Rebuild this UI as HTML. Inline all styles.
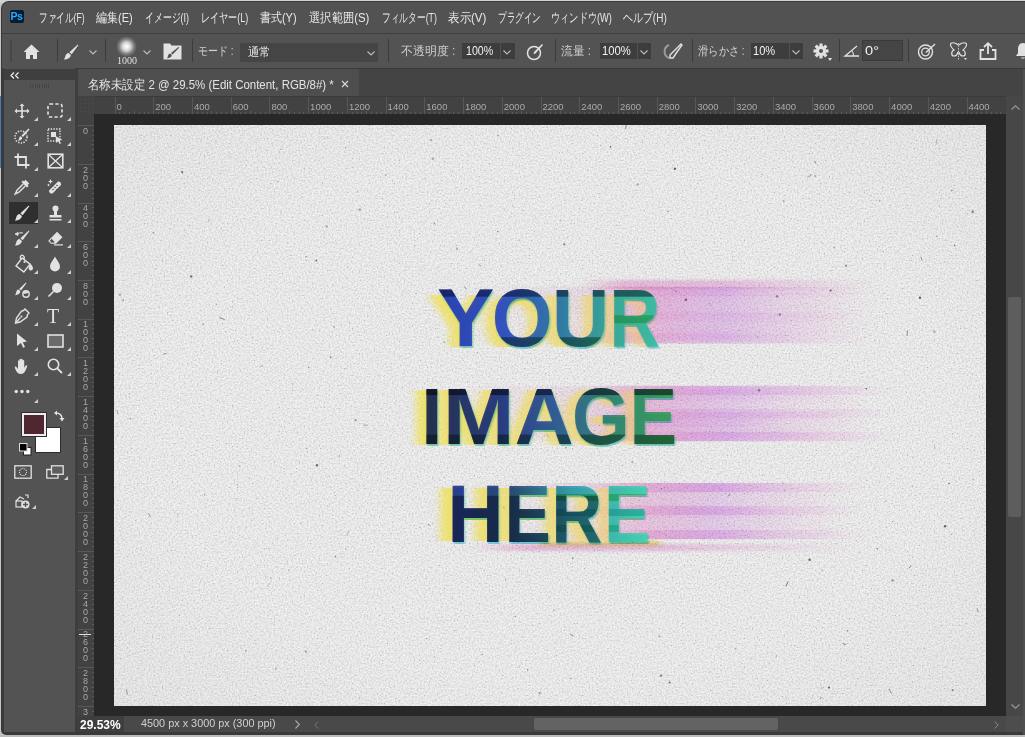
<!DOCTYPE html><html><head><meta charset="utf-8"><style>
*{margin:0;padding:0;box-sizing:border-box}
html,body{width:1025px;height:737px;overflow:hidden;background:#c4c4c4;font-family:"Liberation Sans",sans-serif}
.a{position:absolute}
.m{position:absolute;top:10px;font-size:12px;line-height:14px;color:#e8e8e8;white-space:nowrap}
.sep{position:absolute;top:39px;width:1px;height:23px;background:#3c3c3c}
.lbl{position:absolute;top:45px;font-size:12px;line-height:14px;color:#cfcfcf;white-space:nowrap}
.inp{position:absolute;top:43px;height:16px;background:#3d3d3d}
.val{position:absolute;top:44px;font-size:12px;line-height:14px;color:#f2f2f2;white-space:nowrap}
.rn{position:absolute;top:102px;font-size:9.5px;line-height:10px;color:#ababab;white-space:nowrap}
.vn{position:absolute;left:81px;font-size:9px;line-height:8px;color:#a8a8a8;width:9px;text-align:center}
svg{position:absolute;overflow:visible}
</style></head><body>
<div class="a" style="left:0;top:0;width:1025px;height:3px;background:#d2d2d2"></div>
<div class="a" style="left:0;top:96px;width:2px;height:72px;background:#4a78b8"></div>
<div class="a" style="left:1px;top:1px;width:1030px;height:734px;background:#3a3a3a;border-radius:8px 0 0 5px"></div>
<div class="a" style="left:2px;top:2px;width:1030px;height:31px;background:#525252;border-radius:7px 0 0 0"></div>
<div class="a" style="left:10px;top:10px;width:14px;height:13px;background:#001e36;border-radius:2px"></div>
<div class="a" style="left:10.5px;top:10px;font-size:10.5px;line-height:13px;font-weight:bold;color:#31a8ff;letter-spacing:-0.4px">Ps</div>
<div class="a" style="left:39px;top:9.5px;font-family:'Liberation Sans';font-size:13px;line-height:15px;color:#e8e8e8;font-weight:normal;white-space:nowrap;transform-origin:0 0;transform:scaleX(0.6646);"><span>ファイル(F)</span></div>
<div class="a" style="left:96px;top:9.5px;font-family:'Liberation Sans';font-size:13px;line-height:15px;color:#e8e8e8;font-weight:normal;white-space:nowrap;transform-origin:0 0;transform:scaleX(0.8467);"><span>編集(E)</span></div>
<div class="a" style="left:145px;top:9.5px;font-family:'Liberation Sans';font-size:13px;line-height:15px;color:#e8e8e8;font-weight:normal;white-space:nowrap;transform-origin:0 0;transform:scaleX(0.6845);"><span>イメージ(I)</span></div>
<div class="a" style="left:200.7px;top:9.5px;font-family:'Liberation Sans';font-size:13px;line-height:15px;color:#e8e8e8;font-weight:normal;white-space:nowrap;transform-origin:0 0;transform:scaleX(0.6967);"><span>レイヤー(L)</span></div>
<div class="a" style="left:260.4px;top:9.5px;font-family:'Liberation Sans';font-size:13px;line-height:15px;color:#e8e8e8;font-weight:normal;white-space:nowrap;transform-origin:0 0;transform:scaleX(0.8444);"><span>書式(Y)</span></div>
<div class="a" style="left:309.3px;top:9.5px;font-family:'Liberation Sans';font-size:13px;line-height:15px;color:#e8e8e8;font-weight:normal;white-space:nowrap;transform-origin:0 0;transform:scaleX(0.8710);"><span>選択範囲(S)</span></div>
<div class="a" style="left:381.6px;top:9.5px;font-family:'Liberation Sans';font-size:13px;line-height:15px;color:#e8e8e8;font-weight:normal;white-space:nowrap;transform-origin:0 0;transform:scaleX(0.6715);"><span>フィルター(T)</span></div>
<div class="a" style="left:447.6px;top:9.5px;font-family:'Liberation Sans';font-size:13px;line-height:15px;color:#e8e8e8;font-weight:normal;white-space:nowrap;transform-origin:0 0;transform:scaleX(0.8859);"><span>表示(V)</span></div>
<div class="a" style="left:497.6px;top:9.5px;font-family:'Liberation Sans';font-size:13px;line-height:15px;color:#e8e8e8;font-weight:normal;white-space:nowrap;transform-origin:0 0;transform:scaleX(0.6569);"><span>プラグイン</span></div>
<div class="a" style="left:551.4px;top:9.5px;font-family:'Liberation Sans';font-size:13px;line-height:15px;color:#e8e8e8;font-weight:normal;white-space:nowrap;transform-origin:0 0;transform:scaleX(0.7075);"><span>ウィンドウ(W)</span></div>
<div class="a" style="left:623.3px;top:9.5px;font-family:'Liberation Sans';font-size:13px;line-height:15px;color:#e8e8e8;font-weight:normal;white-space:nowrap;transform-origin:0 0;transform:scaleX(0.7660);"><span>ヘルプ(H)</span></div>
<div class="a" style="left:2px;top:33px;width:1030px;height:1px;background:#3e3e3e"></div>
<div class="a" style="left:2px;top:34px;width:1030px;height:34px;background:#535353"></div>
<div class="a" style="left:1023px;top:68px;width:2px;height:667px;background:#505050"></div>
<div class="a" style="left:10px;top:40px;width:2px;height:22px;background:#474747"></div>
<div class="sep" style="left:57px"></div>
<div class="sep" style="left:105px"></div>
<div class="sep" style="left:192px"></div>
<div class="sep" style="left:388px"></div>
<div class="sep" style="left:555px"></div>
<div class="sep" style="left:692px"></div>
<div class="sep" style="left:839px"></div>
<div class="sep" style="left:908px"></div>
<svg style="left:23px;top:44px" width="17" height="16" viewBox="0 0 17 16"><path d="M8.5 0.5 L0.5 8 L3 8 L3 15 L7 15 L7 11 L10 11 L10 15 L14 15 L14 8 L16.5 8 Z" fill="#e2e2e2"/></svg>
<svg style="left:63px;top:44px" width="16" height="16" viewBox="0 0 16 16"><path d="M14.8 0.6 L15.4 1.2 L8.6 10.2 L6.4 8.2 Z" fill="#e2e2e2"/><path d="M5.6 8.9 L7.9 11 C7.6 13.6 5.2 15.6 0.8 15.6 C1.6 14.8 2 13.6 2.4 12 C2.8 10.2 4 9 5.6 8.9 Z" fill="#e2e2e2"/></svg>
<svg style="left:89px;top:50px" width="8" height="5" viewBox="0 0 8 5"><path d="M0.5 0.5 L4 4 L7.5 0.5" fill="none" stroke="#bdbdbd" stroke-width="1.1"/></svg>
<div class="a" style="left:116px;top:36px;width:21px;height:21px;border-radius:50%;background:radial-gradient(circle closest-side,#ffffff 0%,#f0f0f0 20%,#c8c8c8 45%,rgba(160,160,160,0.6) 70%,rgba(83,83,83,0) 100%)"></div>
<div class="a" style="left:117px;top:54px;font-family:'Liberation Serif';font-size:11px;line-height:13px;color:#e0e0e0;font-weight:normal;white-space:nowrap;transform-origin:0 0;transform:scaleX(0.9091);"><span>1000</span></div>
<svg style="left:143px;top:50px" width="8" height="5" viewBox="0 0 8 5"><path d="M0.5 0.5 L4 4 L7.5 0.5" fill="none" stroke="#bdbdbd" stroke-width="1.1"/></svg>
<svg style="left:163px;top:43px" width="19" height="17" viewBox="0 0 19 17"><path d="M0.5 0.5 L7 0.5 L8.5 2.5 L18.5 2.5 L18.5 16.5 L0.5 16.5 Z" fill="#e2e2e2"/><path d="M15.5 4 L16.2 4.7 L9.5 11.5 L8 10 Z" fill="#535353"/><path d="M7.3 10.6 L8.9 12.2 C8.6 14 6.8 15 4 15.2 C4.6 14.5 4.8 13.6 5.1 12.6 C5.4 11.5 6.2 10.7 7.3 10.6 Z" fill="#535353"/></svg>
<div class="a" style="left:197.6px;top:44px;font-family:'Liberation Sans';font-size:12px;line-height:14px;color:#cfcfcf;font-weight:normal;white-space:nowrap;transform-origin:0 0;transform:scaleX(0.8296);"><span>モード :</span></div>
<div class="inp" style="left:240px;width:138px;height:19px;top:43px;background:#454545"></div>
<div class="a" style="left:248px;top:45px;font-family:'Liberation Sans';font-size:12px;line-height:14px;color:#e6e6e6;font-weight:normal;white-space:nowrap;transform-origin:0 0;transform:scaleX(0.9458);"><span>通常</span></div>
<svg style="left:367px;top:51px" width="8" height="5" viewBox="0 0 8 5"><path d="M0.5 0.5 L4 4 L7.5 0.5" fill="none" stroke="#bdbdbd" stroke-width="1.1"/></svg>
<div class="a" style="left:400.6px;top:44px;font-family:'Liberation Sans';font-size:12px;line-height:14px;color:#cfcfcf;font-weight:normal;white-space:nowrap;transform-origin:0 0;transform:scaleX(0.9950);"><span>不透明度 :</span></div>
<div class="inp" style="left:462px;width:53px"></div><div class="a" style="left:500px;top:43px;width:1px;height:16px;background:#505050"></div>
<div class="a" style="left:465.6px;top:43.3px;font-family:'Liberation Sans';font-size:13px;line-height:15px;color:#f2f2f2;font-weight:normal;white-space:nowrap;transform-origin:0 0;transform:scaleX(0.8180);"><span>100%</span></div>
<svg style="left:503px;top:50px" width="8" height="5" viewBox="0 0 8 5"><path d="M0.5 0.5 L4 4 L7.5 0.5" fill="none" stroke="#bdbdbd" stroke-width="1.1"/></svg>
<svg style="left:526px;top:43px" width="18" height="18" viewBox="0 0 18 18"><circle cx="8" cy="10" r="6.5" fill="none" stroke="#e2e2e2" stroke-width="1.5"/><path d="M16 1 L17 2 L9.5 10.5 L7.5 11 L8 9 Z" fill="#e2e2e2"/></svg>
<div class="a" style="left:561px;top:44px;font-family:'Liberation Sans';font-size:12px;line-height:14px;color:#cfcfcf;font-weight:normal;white-space:nowrap;transform-origin:0 0;transform:scaleX(0.9781);"><span>流量 :</span></div>
<div class="inp" style="left:600px;width:51px"></div><div class="a" style="left:637px;top:43px;width:1px;height:16px;background:#505050"></div>
<div class="a" style="left:601.7px;top:43.3px;font-family:'Liberation Sans';font-size:13px;line-height:15px;color:#f2f2f2;font-weight:normal;white-space:nowrap;transform-origin:0 0;transform:scaleX(0.8662);"><span>100%</span></div>
<svg style="left:640px;top:50px" width="8" height="5" viewBox="0 0 8 5"><path d="M0.5 0.5 L4 4 L7.5 0.5" fill="none" stroke="#bdbdbd" stroke-width="1.1"/></svg>
<svg style="left:663px;top:43px" width="20" height="17" viewBox="0 0 20 17"><path d="M6 2 A7 7 0 0 0 6 15" fill="none" stroke="#9a9a9a" stroke-width="2"/><path d="M18 1 L19 2 L14 9 L10 15 L7 15 L7 12 L12 7 Z" fill="none" stroke="#e2e2e2" stroke-width="1.4"/></svg>
<div class="a" style="left:698px;top:44px;font-family:'Liberation Sans';font-size:12px;line-height:14px;color:#cfcfcf;font-weight:normal;white-space:nowrap;transform-origin:0 0;transform:scaleX(0.8542);"><span>滑らかさ :</span></div>
<div class="inp" style="left:751px;width:52px"></div><div class="a" style="left:789px;top:43px;width:1px;height:16px;background:#505050"></div>
<div class="a" style="left:753px;top:43.3px;font-family:'Liberation Sans';font-size:13px;line-height:15px;color:#f2f2f2;font-weight:normal;white-space:nowrap;transform-origin:0 0;transform:scaleX(0.8528);"><span>10%</span></div>
<svg style="left:792px;top:50px" width="8" height="5" viewBox="0 0 8 5"><path d="M0.5 0.5 L4 4 L7.5 0.5" fill="none" stroke="#bdbdbd" stroke-width="1.1"/></svg>
<svg style="left:813px;top:43px" width="16" height="16" viewBox="-8 -8 16 16"><rect x="-1.6" y="-7.5" width="3.2" height="4" transform="rotate(0)" fill="#e2e2e2"/><rect x="-1.6" y="-7.5" width="3.2" height="4" transform="rotate(45)" fill="#e2e2e2"/><rect x="-1.6" y="-7.5" width="3.2" height="4" transform="rotate(90)" fill="#e2e2e2"/><rect x="-1.6" y="-7.5" width="3.2" height="4" transform="rotate(135)" fill="#e2e2e2"/><rect x="-1.6" y="-7.5" width="3.2" height="4" transform="rotate(180)" fill="#e2e2e2"/><rect x="-1.6" y="-7.5" width="3.2" height="4" transform="rotate(225)" fill="#e2e2e2"/><rect x="-1.6" y="-7.5" width="3.2" height="4" transform="rotate(270)" fill="#e2e2e2"/><rect x="-1.6" y="-7.5" width="3.2" height="4" transform="rotate(315)" fill="#e2e2e2"/><circle r="5" fill="#e2e2e2"/><circle r="2" fill="#535353"/></svg>
<svg style="left:828px;top:58px" width="4" height="3" viewBox="0 0 4 3"><path d="M0 0 L4 0 L2 3Z" fill="#e2e2e2"/></svg>
<svg style="left:844px;top:45px" width="16" height="12" viewBox="0 0 16 12"><path d="M15 11 L1 11 L13 1" fill="none" stroke="#e2e2e2" stroke-width="1.3"/><path d="M8 6 A6 6 0 0 1 9.5 11" fill="none" stroke="#e2e2e2" stroke-width="1.1"/></svg>
<div class="inp" style="left:862px;top:40px;width:41px;height:21px;background:#454545;border:1px solid #3a3a3a"></div>
<div class="a" style="left:865px;top:43.3px;font-family:'Liberation Sans';font-size:13px;line-height:15px;color:#f2f2f2;font-weight:normal;white-space:nowrap;transform-origin:0 0;transform:scaleX(1.1256);"><span>0°</span></div>
<svg style="left:917px;top:43px" width="19" height="17" viewBox="0 0 19 17"><circle cx="8.5" cy="9" r="7" fill="none" stroke="#e2e2e2" stroke-width="1.4"/><circle cx="8.5" cy="9" r="3.8" fill="none" stroke="#e2e2e2" stroke-width="1.3"/><path d="M17.5 0.5 L18.5 1.5 L10 9.5 L8.5 10 L9 8.5 Z" fill="#e2e2e2"/></svg>
<svg style="left:949px;top:42px" width="19" height="19" viewBox="0 0 19 19"><path d="M9 3 C6 0 1 0 1.5 3 C2 6 4 7 5 8 C2 9 2 14 5 14 C7 14 8.5 12 9 10" fill="none" stroke="#e2e2e2" stroke-width="1.2"/><path d="M10 3 C13 0 18 0 17.5 3 C17 6 15 7 14 8 C17 9 17 14 14 14 C12 14 10.5 12 10 10" fill="none" stroke="#e2e2e2" stroke-width="1.2"/><path d="M9.5 1 L9.5 18" stroke="#e2e2e2" stroke-width="0.8" stroke-dasharray="1.5 1"/><path d="M15 16 L18 16 L16.5 18Z" fill="#e2e2e2"/></svg>
<svg style="left:979px;top:42px" width="18" height="18" viewBox="0 0 18 18"><path d="M5 8 L1.5 8 L1.5 17 L16.5 17 L16.5 8 L13 8" fill="none" stroke="#e2e2e2" stroke-width="1.8"/><path d="M9 12 L9 1.5 M5 5 L9 1.2 L13 5" fill="none" stroke="#e2e2e2" stroke-width="1.8"/></svg>
<svg style="left:1015px;top:42px" width="16" height="18" viewBox="0 0 16 18"><path d="M8 1 C3.5 1 3 5 3 8 L3 11 L1 14 L15 14 L13 11 L13 8 C13 5 12.5 1 8 1 Z" fill="#e2e2e2"/><path d="M6 15.5 L10 15.5 C10 17 6 17 6 15.5" fill="#e2e2e2"/></svg>
<div class="a" style="left:4px;top:68px;width:71px;height:664px;background:#535353"></div>
<div class="a" style="left:4px;top:69px;width:71px;height:11px;background:#3f3f3f"></div>
<svg style="left:10px;top:72px" width="10" height="7" viewBox="0 0 10 7"><path d="M4 0.5 L1 3.5 L4 6.5 M8.5 0.5 L5.5 3.5 L8.5 6.5" fill="none" stroke="#f0f0f0" stroke-width="1.2"/></svg>
<div class="a" style="left:30.0px;top:84px;width:1px;height:4px;background:#454545"></div>
<div class="a" style="left:32.3px;top:84px;width:1px;height:4px;background:#454545"></div>
<div class="a" style="left:34.6px;top:84px;width:1px;height:4px;background:#454545"></div>
<div class="a" style="left:36.9px;top:84px;width:1px;height:4px;background:#454545"></div>
<div class="a" style="left:39.2px;top:84px;width:1px;height:4px;background:#454545"></div>
<div class="a" style="left:41.5px;top:84px;width:1px;height:4px;background:#454545"></div>
<div class="a" style="left:43.8px;top:84px;width:1px;height:4px;background:#454545"></div>
<div class="a" style="left:46.1px;top:84px;width:1px;height:4px;background:#454545"></div>
<div class="a" style="left:48.4px;top:84px;width:1px;height:4px;background:#454545"></div>
<div class="a" style="left:75px;top:68px;width:3px;height:664px;background:#3e3e3e"></div>
<svg style="left:14.0px;top:102.9px" width="16" height="16" viewBox="0 0 16 16"><path d="M8 0.5 L10.5 3 L8.8 3 L8.8 7.2 L13 7.2 L13 5.5 L15.5 8 L13 10.5 L13 8.8 L8.8 8.8 L8.8 13 L10.5 13 L8 15.5 L5.5 13 L7.2 13 L7.2 8.8 L3 8.8 L3 10.5 L0.5 8 L3 5.5 L3 7.2 L7.2 7.2 L7.2 3 L5.5 3 Z" fill="#e2e2e2"/></svg>
<svg style="left:47.0px;top:103.4px" width="16" height="15" viewBox="0 0 16 15"><rect x="1" y="1" width="14" height="13" rx="2" fill="none" stroke="#e2e2e2" stroke-width="1.6" stroke-dasharray="3.2 2.2"/></svg>
<svg style="left:14.0px;top:127.6px" width="16" height="16" viewBox="0 0 16 16"><circle cx="7" cy="9" r="6" fill="none" stroke="#e2e2e2" stroke-width="1.6" stroke-dasharray="1.3 1.4"/><path d="M14.5 0.5 L15.5 1.5 L9 9 L7.5 7.5 Z" fill="#e2e2e2"/><path d="M6.8 8.3 L8.3 9.8 C8 11.6 6.5 12.6 4 12.8 C4.6 12.2 4.8 11.3 5 10.5 C5.3 9.3 5.8 8.5 6.8 8.3Z" fill="#e2e2e2"/></svg>
<svg style="left:47.0px;top:127.6px" width="16" height="16" viewBox="0 0 16 16"><rect x="1" y="1" width="12" height="12" fill="none" stroke="#e2e2e2" stroke-width="1.4" stroke-dasharray="1.4 1.3"/><rect x="4" y="4" width="5" height="5" fill="#e2e2e2"/><path d="M8.5 8 L15.5 12 L12.5 12.5 L14 15.5 L12.6 16 L11.3 13.2 L9.3 15 Z" fill="#e2e2e2"/></svg>
<svg style="left:14.0px;top:152.6px" width="16" height="16" viewBox="0 0 16 16"><path d="M4 0.5 L4 12 L15.5 12 M0.5 4 L12 4 L12 15.5" fill="none" stroke="#e2e2e2" stroke-width="1.8"/></svg>
<svg style="left:46.5px;top:152.6px" width="17" height="16" viewBox="0 0 17 16"><rect x="1.2" y="1.2" width="14.6" height="13.6" fill="none" stroke="#e2e2e2" stroke-width="1.6"/><path d="M1.5 1.5 L15.5 14.5 M15.5 1.5 L1.5 14.5" stroke="#e2e2e2" stroke-width="1.3"/></svg>
<svg style="left:14.0px;top:179.4px" width="16" height="16" viewBox="0 0 16 16"><path d="M11.5 0.8 L15.2 4.5 L13.6 6 L14.6 7 L13 8.6 L7.4 3 L9 1.4 L10 2.4 Z" fill="#e2e2e2"/><path d="M9.2 5 L3 11.2 L1.2 15 L5 13.2 L11.2 7" fill="none" stroke="#e2e2e2" stroke-width="1.4"/></svg>
<svg style="left:47.0px;top:179.4px" width="16" height="16" viewBox="0 0 16 16"><path d="M12 3 A2.8 2.8 0 0 1 15 6.5 L6.5 15 A2.8 2.8 0 0 1 3 12 Z" fill="#e2e2e2" transform="translate(-1 -0.5)"/><circle cx="8" cy="8.5" r="0.8" fill="#535353"/><circle cx="10" cy="6.5" r="0.8" fill="#535353"/><circle cx="6" cy="10.5" r="0.8" fill="#535353"/><circle cx="10" cy="10.5" r="0.8" fill="#535353"/><circle cx="6" cy="6.5" r="0.8" fill="#535353"/><path d="M3.5 0 L4.2 1.8 L6 2.5 L4.2 3.2 L3.5 5 L2.8 3.2 L1 2.5 L2.8 1.8Z" fill="#e2e2e2"/><path d="M1.5 4.5 L2 5.5 L3 6 L2 6.5 L1.5 7.5 L1 6.5 L0 6 L1 5.5Z" fill="#e2e2e2"/></svg>
<div class="a" style="left:9px;top:202px;width:29px;height:22px;background:#2f2f2f"></div>
<svg style="left:14.0px;top:205.0px" width="16" height="16" viewBox="0 0 16 16"><path d="M14.8 0.6 L15.4 1.2 L8.6 10.2 L6.4 8.2 Z" fill="#e2e2e2"/><path d="M5.6 8.9 L7.9 11 C7.6 13.6 5.2 15.6 0.8 15.6 C1.6 14.8 2 13.6 2.4 12 C2.8 10.2 4 9 5.6 8.9 Z" fill="#e2e2e2"/></svg>
<svg style="left:47.5px;top:205.0px" width="15" height="16" viewBox="0 0 15 16"><circle cx="7.5" cy="3.5" r="3" fill="#e2e2e2"/><rect x="6" y="6" width="3" height="4" fill="#e2e2e2"/><path d="M1.5 10 L13.5 10 L13.5 12.5 L1.5 12.5 Z" fill="#e2e2e2"/><rect x="1.5" y="14" width="12" height="1.5" fill="#e2e2e2"/></svg>
<svg style="left:14.0px;top:230.4px" width="16" height="16" viewBox="0 0 16 16"><path d="M14.8 0.6 L15.4 1.2 L8.6 10.2 L6.4 8.2 Z" fill="#e2e2e2"/><path d="M5.6 8.9 L7.9 11 C7.6 13.6 5.2 15.6 0.8 15.6 C1.6 14.8 2 13.6 2.4 12 C2.8 10.2 4 9 5.6 8.9 Z" fill="#e2e2e2"/><path d="M1 4 L4 2.5 L4 5.5Z M4 3.5 C6 2.5 8 2.5 9 3" fill="#e2e2e2" stroke="#e2e2e2" stroke-width="0.8"/></svg>
<svg style="left:46.5px;top:230.9px" width="17" height="15" viewBox="0 0 17 15"><path d="M10 0.8 L15.5 6.3 L9 12.8 L4 12.8 L1.2 10 Z" fill="#e2e2e2"/><path d="M4.3 7 L8 10.7 L6.5 12.2 L4.5 12.2 L2.4 10 Z" fill="#535353" stroke="#e2e2e2" stroke-width="1"/><rect x="7" y="13.3" width="9" height="1.2" fill="#e2e2e2"/></svg>
<svg style="left:13px;top:254px" width="22" height="20" viewBox="0 0 22 20"><rect x="5" y="6" width="10" height="10" transform="rotate(38 10 11)" fill="none" stroke="#e2e2e2" stroke-width="1.4"/><path d="M7.5 5 C6.5 2 8.5 0.8 10 1.5 C11.5 2.2 11.5 4 11 6" fill="none" stroke="#e2e2e2" stroke-width="1.3"/><circle cx="11.5" cy="8" r="1.1" fill="#e2e2e2"/><path d="M17.5 9.5 C18.5 11.5 20 12.5 20 14.2 A2.2 2.2 0 0 1 15.6 14.2 C15.6 12.5 17 11.5 17.5 9.5Z" fill="#e2e2e2"/></svg>
<svg style="left:49.0px;top:255.6px" width="12" height="16" viewBox="0 0 12 16"><path d="M6 0.5 C7 3 11 7 11 10.5 A5 5 0 0 1 1 10.5 C1 7 5 3 6 0.5Z" fill="#e2e2e2"/></svg>
<svg style="left:14.0px;top:281.7px" width="16" height="16" viewBox="0 0 16 16"><path d="M11.8 0.6 L12.4 1.2 L7 8.5 L5.2 7 Z" fill="#e2e2e2"/><path d="M4.6 7.6 L6.4 9.3 C6.2 11.5 4.2 13 1 13.2 C1.6 12.5 1.9 11.5 2.2 10.3 C2.5 8.8 3.3 7.8 4.6 7.6 Z" fill="#e2e2e2"/><circle cx="12" cy="12" r="3.2" fill="none" stroke="#e2e2e2" stroke-width="1.4"/><path d="M9.5 12 A2.5 2.5 0 0 1 14.5 11" fill="#e2e2e2"/></svg>
<svg style="left:47.0px;top:281.7px" width="16" height="16" viewBox="0 0 16 16"><circle cx="10" cy="6" r="5" fill="#e2e2e2"/><path d="M6.5 9.5 L1.5 14.5" stroke="#e2e2e2" stroke-width="1.6"/></svg>
<svg style="left:14.0px;top:307.5px" width="16" height="16" viewBox="0 0 16 16"><path d="M11 1 L15 5 L13.5 6.5 L13 9 L6 14 L1.5 15 L2.5 10 L7.5 3 L9.5 2.5 Z" fill="none" stroke="#e2e2e2" stroke-width="1.4"/><path d="M2 14.5 L6.5 9.5" stroke="#e2e2e2" stroke-width="1.2"/><circle cx="7.5" cy="8.5" r="1" fill="#e2e2e2"/></svg>
<div class="a" style="left:47px;top:306px;font-family:'Liberation Serif',serif;font-size:20px;line-height:20px;color:#e2e2e2">T</div>
<svg style="left:16.0px;top:332.5px" width="12" height="16" viewBox="0 0 12 16"><path d="M1 0.5 L11 8.5 L6.8 9.2 L9 14 L7.2 14.8 L5 10 L1 13 Z" fill="#e2e2e2"/></svg>
<svg style="left:46.5px;top:333.5px" width="17" height="14" viewBox="0 0 17 14"><rect x="1" y="1" width="15" height="12" fill="#6a6a6a" stroke="#e2e2e2" stroke-width="1.6"/></svg>
<svg style="left:14.0px;top:357.7px" width="16" height="17" viewBox="0 0 16 17"><path d="M4 9 L4 3 C4 2 5.5 2 5.5 3 L5.5 7.5 L5.5 1.5 C5.5 0.5 7 0.5 7 1.5 L7 7.5 L7 1.5 C7 0.5 8.6 0.5 8.6 1.5 L8.6 7.5 L8.6 2.8 C8.6 1.8 10.2 1.8 10.2 2.8 L10.2 10 C10.8 8.5 11.5 7 12.8 7.2 C13.6 7.4 13 9 12.5 10 C11.5 12.5 10.5 16 7 16 C4 16 2.5 14 1.5 11.5 L0.8 9.5 C0.5 8.5 2 8 2.5 9 L4 11Z" fill="#e2e2e2"/></svg>
<svg style="left:47.0px;top:358.2px" width="16" height="16" viewBox="0 0 16 16"><circle cx="6.5" cy="6.5" r="5.2" fill="none" stroke="#e2e2e2" stroke-width="1.6"/><path d="M10.3 10.3 L15 15" stroke="#e2e2e2" stroke-width="1.8"/></svg>
<svg style="left:14.0px;top:389.3px" width="16" height="5" viewBox="0 0 16 5"><circle cx="2.2" cy="2.5" r="1.7" fill="#e2e2e2"/><circle cx="8" cy="2.5" r="1.7" fill="#e2e2e2"/><circle cx="13.8" cy="2.5" r="1.7" fill="#e2e2e2"/></svg>
<svg style="left:34px;top:116.9px" width="4" height="4" viewBox="0 0 4 4"><path d="M4 0 L4 4 L0 4Z" fill="#cfcfcf"/></svg>
<svg style="left:67px;top:116.9px" width="4" height="4" viewBox="0 0 4 4"><path d="M4 0 L4 4 L0 4Z" fill="#cfcfcf"/></svg>
<svg style="left:34px;top:141.6px" width="4" height="4" viewBox="0 0 4 4"><path d="M4 0 L4 4 L0 4Z" fill="#cfcfcf"/></svg>
<svg style="left:67px;top:141.6px" width="4" height="4" viewBox="0 0 4 4"><path d="M4 0 L4 4 L0 4Z" fill="#cfcfcf"/></svg>
<svg style="left:34px;top:166.6px" width="4" height="4" viewBox="0 0 4 4"><path d="M4 0 L4 4 L0 4Z" fill="#cfcfcf"/></svg>
<svg style="left:67px;top:166.6px" width="4" height="4" viewBox="0 0 4 4"><path d="M4 0 L4 4 L0 4Z" fill="#cfcfcf"/></svg>
<svg style="left:34px;top:193.4px" width="4" height="4" viewBox="0 0 4 4"><path d="M4 0 L4 4 L0 4Z" fill="#cfcfcf"/></svg>
<svg style="left:67px;top:193.4px" width="4" height="4" viewBox="0 0 4 4"><path d="M4 0 L4 4 L0 4Z" fill="#cfcfcf"/></svg>
<svg style="left:34px;top:219.0px" width="4" height="4" viewBox="0 0 4 4"><path d="M4 0 L4 4 L0 4Z" fill="#cfcfcf"/></svg>
<svg style="left:67px;top:219.0px" width="4" height="4" viewBox="0 0 4 4"><path d="M4 0 L4 4 L0 4Z" fill="#cfcfcf"/></svg>
<svg style="left:34px;top:244.4px" width="4" height="4" viewBox="0 0 4 4"><path d="M4 0 L4 4 L0 4Z" fill="#cfcfcf"/></svg>
<svg style="left:67px;top:244.4px" width="4" height="4" viewBox="0 0 4 4"><path d="M4 0 L4 4 L0 4Z" fill="#cfcfcf"/></svg>
<svg style="left:34px;top:269.6px" width="4" height="4" viewBox="0 0 4 4"><path d="M4 0 L4 4 L0 4Z" fill="#cfcfcf"/></svg>
<svg style="left:67px;top:269.6px" width="4" height="4" viewBox="0 0 4 4"><path d="M4 0 L4 4 L0 4Z" fill="#cfcfcf"/></svg>
<svg style="left:34px;top:295.7px" width="4" height="4" viewBox="0 0 4 4"><path d="M4 0 L4 4 L0 4Z" fill="#cfcfcf"/></svg>
<svg style="left:67px;top:295.7px" width="4" height="4" viewBox="0 0 4 4"><path d="M4 0 L4 4 L0 4Z" fill="#cfcfcf"/></svg>
<svg style="left:34px;top:321.5px" width="4" height="4" viewBox="0 0 4 4"><path d="M4 0 L4 4 L0 4Z" fill="#cfcfcf"/></svg>
<svg style="left:67px;top:321.5px" width="4" height="4" viewBox="0 0 4 4"><path d="M4 0 L4 4 L0 4Z" fill="#cfcfcf"/></svg>
<svg style="left:34px;top:346.5px" width="4" height="4" viewBox="0 0 4 4"><path d="M4 0 L4 4 L0 4Z" fill="#cfcfcf"/></svg>
<svg style="left:67px;top:346.5px" width="4" height="4" viewBox="0 0 4 4"><path d="M4 0 L4 4 L0 4Z" fill="#cfcfcf"/></svg>
<svg style="left:34px;top:372.2px" width="4" height="4" viewBox="0 0 4 4"><path d="M4 0 L4 4 L0 4Z" fill="#cfcfcf"/></svg>
<svg style="left:67px;top:372.2px" width="4" height="4" viewBox="0 0 4 4"><path d="M4 0 L4 4 L0 4Z" fill="#cfcfcf"/></svg>
<svg style="left:34px;top:398.8px" width="4" height="4" viewBox="0 0 4 4"><path d="M4 0 L4 4 L0 4Z" fill="#cfcfcf"/></svg>
<div class="a" style="left:35px;top:427px;width:26px;height:26px;background:#2e2e2e"></div>
<div class="a" style="left:36px;top:428px;width:24px;height:24px;background:#ffffff"></div>
<div class="a" style="left:21px;top:412px;width:26px;height:25px;background:#2e2e2e"></div>
<div class="a" style="left:22px;top:413px;width:24px;height:23px;background:#ececec"></div>
<div class="a" style="left:24px;top:415px;width:20px;height:19px;background:#4f2630"></div>
<svg style="left:54px;top:410px" width="11" height="12" viewBox="0 0 11 12"><path d="M1.5 3 C5 3 8 4 8 9" fill="none" stroke="#e2e2e2" stroke-width="1.5"/><path d="M0 3 L3 0.5 L3 5.5Z M5.5 8 L10.5 8 L8 11.5Z" fill="#e2e2e2"/></svg>
<svg style="left:19px;top:443px" width="13" height="13" viewBox="0 0 13 13"><rect x="4.5" y="4.5" width="7.5" height="7.5" fill="#ffffff" stroke="#222" stroke-width="1"/><rect x="0.5" y="0.5" width="7.5" height="7.5" fill="#000" stroke="#dcdcdc" stroke-width="1"/></svg>
<svg style="left:14px;top:465px" width="18" height="14" viewBox="0 0 18 14"><rect x="0.8" y="0.8" width="16.4" height="12.4" fill="none" stroke="#e2e2e2" stroke-width="1.3"/><circle cx="9" cy="7" r="3.6" fill="none" stroke="#e2e2e2" stroke-width="1.1" stroke-dasharray="1 1"/></svg>
<svg style="left:46px;top:465px" width="18" height="14" viewBox="0 0 18 14"><rect x="5.5" y="0.8" width="11.7" height="8.5" fill="#5e5e5e" stroke="#e2e2e2" stroke-width="1.3"/><path d="M5.5 4.5 L0.8 4.5 L0.8 13.2 L12 13.2 L12 9.3" fill="none" stroke="#e2e2e2" stroke-width="1.3"/></svg>
<svg style="left:64px;top:476px" width="4" height="4" viewBox="0 0 4 4"><path d="M4 0 L4 4 L0 4Z" fill="#cfcfcf"/></svg>
<svg style="left:15px;top:494px" width="16" height="15" viewBox="0 0 16 15"><path d="M1 7 L5 3 L9 5" fill="none" stroke="#e2e2e2" stroke-width="1.2"/><rect x="1" y="7" width="6" height="6" fill="none" stroke="#e2e2e2" stroke-width="1.2"/><path d="M10 1 L13 1 L13 4" fill="none" stroke="#e2e2e2" stroke-width="1.2"/><circle cx="10.5" cy="10.5" r="4" fill="#e2e2e2"/><path d="M10.5 8 L10.5 13 M8 10.5 L13 10.5" stroke="#535353" stroke-width="1.3"/></svg>
<svg style="left:32px;top:505px" width="4" height="4" viewBox="0 0 4 4"><path d="M4 0 L4 4 L0 4Z" fill="#cfcfcf"/></svg>
<div class="a" style="left:78px;top:68px;width:945px;height:28px;background:#444444"></div>
<div class="a" style="left:76px;top:68px;width:949px;height:1px;background:#3a3a3a"></div>
<div class="a" style="left:78px;top:69px;width:281px;height:27px;background:#4e4e4e"></div>
<div class="a" style="left:87.7px;top:77px;font-family:'Liberation Sans';font-size:13px;line-height:15px;color:#e4e4e4;font-weight:normal;white-space:nowrap;transform-origin:0 0;transform:scaleX(0.8808);"><span>名称未設定 2 @ 29.5% (Edit Content, RGB/8#) *</span></div>
<svg style="left:341px;top:80px" width="8" height="8" viewBox="0 0 8 8"><path d="M1 1 L7 7 M7 1 L1 7" stroke="#d8d8d8" stroke-width="1.2"/></svg>
<div class="a" style="left:78px;top:96px;width:928px;height:18px;background:#424242;border-top:1px solid #3a3a3a"></div>
<div class="a" style="left:78px;top:96px;width:16px;height:620px;background:#424242"></div>
<div class="a" style="left:80px;top:97px;width:1px;height:17px;background:#464646"></div>
<div class="a" style="left:78px;top:99px;width:16px;height:1px;background:#464646"></div>
<div class="a" style="left:84px;top:97px;width:1px;height:17px;background:#464646"></div>
<div class="a" style="left:78px;top:103px;width:16px;height:1px;background:#464646"></div>
<div class="a" style="left:88px;top:97px;width:1px;height:17px;background:#464646"></div>
<div class="a" style="left:78px;top:107px;width:16px;height:1px;background:#464646"></div>
<div class="a" style="left:92px;top:97px;width:1px;height:17px;background:#464646"></div>
<div class="a" style="left:78px;top:111px;width:16px;height:1px;background:#464646"></div>
<div class="a" style="left:114.5px;top:97px;width:1px;height:17px;background:#575757"></div>
<div class="rn" style="left:116.5px">0</div>
<div class="a" style="left:119.3px;top:112px;width:1px;height:2px;background:#5a5a5a"></div>
<div class="a" style="left:124.2px;top:112px;width:1px;height:2px;background:#5a5a5a"></div>
<div class="a" style="left:129.0px;top:112px;width:1px;height:2px;background:#5a5a5a"></div>
<div class="a" style="left:133.9px;top:111px;width:1px;height:3px;background:#5a5a5a"></div>
<div class="a" style="left:138.7px;top:112px;width:1px;height:2px;background:#5a5a5a"></div>
<div class="a" style="left:143.5px;top:112px;width:1px;height:2px;background:#5a5a5a"></div>
<div class="a" style="left:148.4px;top:112px;width:1px;height:2px;background:#5a5a5a"></div>
<div class="a" style="left:153.2px;top:97px;width:1px;height:17px;background:#575757"></div>
<div class="rn" style="left:155.2px">200</div>
<div class="a" style="left:158.1px;top:112px;width:1px;height:2px;background:#5a5a5a"></div>
<div class="a" style="left:162.9px;top:112px;width:1px;height:2px;background:#5a5a5a"></div>
<div class="a" style="left:167.8px;top:112px;width:1px;height:2px;background:#5a5a5a"></div>
<div class="a" style="left:172.6px;top:111px;width:1px;height:3px;background:#5a5a5a"></div>
<div class="a" style="left:177.4px;top:112px;width:1px;height:2px;background:#5a5a5a"></div>
<div class="a" style="left:182.3px;top:112px;width:1px;height:2px;background:#5a5a5a"></div>
<div class="a" style="left:187.1px;top:112px;width:1px;height:2px;background:#5a5a5a"></div>
<div class="a" style="left:192.0px;top:97px;width:1px;height:17px;background:#575757"></div>
<div class="rn" style="left:194.0px">400</div>
<div class="a" style="left:196.8px;top:112px;width:1px;height:2px;background:#5a5a5a"></div>
<div class="a" style="left:201.6px;top:112px;width:1px;height:2px;background:#5a5a5a"></div>
<div class="a" style="left:206.5px;top:112px;width:1px;height:2px;background:#5a5a5a"></div>
<div class="a" style="left:211.3px;top:111px;width:1px;height:3px;background:#5a5a5a"></div>
<div class="a" style="left:216.2px;top:112px;width:1px;height:2px;background:#5a5a5a"></div>
<div class="a" style="left:221.0px;top:112px;width:1px;height:2px;background:#5a5a5a"></div>
<div class="a" style="left:225.8px;top:112px;width:1px;height:2px;background:#5a5a5a"></div>
<div class="a" style="left:230.7px;top:97px;width:1px;height:17px;background:#575757"></div>
<div class="rn" style="left:232.7px">600</div>
<div class="a" style="left:235.5px;top:112px;width:1px;height:2px;background:#5a5a5a"></div>
<div class="a" style="left:240.4px;top:112px;width:1px;height:2px;background:#5a5a5a"></div>
<div class="a" style="left:245.2px;top:112px;width:1px;height:2px;background:#5a5a5a"></div>
<div class="a" style="left:250.1px;top:111px;width:1px;height:3px;background:#5a5a5a"></div>
<div class="a" style="left:254.9px;top:112px;width:1px;height:2px;background:#5a5a5a"></div>
<div class="a" style="left:259.7px;top:112px;width:1px;height:2px;background:#5a5a5a"></div>
<div class="a" style="left:264.6px;top:112px;width:1px;height:2px;background:#5a5a5a"></div>
<div class="a" style="left:269.4px;top:97px;width:1px;height:17px;background:#575757"></div>
<div class="rn" style="left:271.4px">800</div>
<div class="a" style="left:274.3px;top:112px;width:1px;height:2px;background:#5a5a5a"></div>
<div class="a" style="left:279.1px;top:112px;width:1px;height:2px;background:#5a5a5a"></div>
<div class="a" style="left:283.9px;top:112px;width:1px;height:2px;background:#5a5a5a"></div>
<div class="a" style="left:288.8px;top:111px;width:1px;height:3px;background:#5a5a5a"></div>
<div class="a" style="left:293.6px;top:112px;width:1px;height:2px;background:#5a5a5a"></div>
<div class="a" style="left:298.5px;top:112px;width:1px;height:2px;background:#5a5a5a"></div>
<div class="a" style="left:303.3px;top:112px;width:1px;height:2px;background:#5a5a5a"></div>
<div class="a" style="left:308.1px;top:97px;width:1px;height:17px;background:#575757"></div>
<div class="rn" style="left:310.1px">1000</div>
<div class="a" style="left:313.0px;top:112px;width:1px;height:2px;background:#5a5a5a"></div>
<div class="a" style="left:317.8px;top:112px;width:1px;height:2px;background:#5a5a5a"></div>
<div class="a" style="left:322.7px;top:112px;width:1px;height:2px;background:#5a5a5a"></div>
<div class="a" style="left:327.5px;top:111px;width:1px;height:3px;background:#5a5a5a"></div>
<div class="a" style="left:332.4px;top:112px;width:1px;height:2px;background:#5a5a5a"></div>
<div class="a" style="left:337.2px;top:112px;width:1px;height:2px;background:#5a5a5a"></div>
<div class="a" style="left:342.0px;top:112px;width:1px;height:2px;background:#5a5a5a"></div>
<div class="a" style="left:346.9px;top:97px;width:1px;height:17px;background:#575757"></div>
<div class="rn" style="left:348.9px">1200</div>
<div class="a" style="left:351.7px;top:112px;width:1px;height:2px;background:#5a5a5a"></div>
<div class="a" style="left:356.6px;top:112px;width:1px;height:2px;background:#5a5a5a"></div>
<div class="a" style="left:361.4px;top:112px;width:1px;height:2px;background:#5a5a5a"></div>
<div class="a" style="left:366.2px;top:111px;width:1px;height:3px;background:#5a5a5a"></div>
<div class="a" style="left:371.1px;top:112px;width:1px;height:2px;background:#5a5a5a"></div>
<div class="a" style="left:375.9px;top:112px;width:1px;height:2px;background:#5a5a5a"></div>
<div class="a" style="left:380.8px;top:112px;width:1px;height:2px;background:#5a5a5a"></div>
<div class="a" style="left:385.6px;top:97px;width:1px;height:17px;background:#575757"></div>
<div class="rn" style="left:387.6px">1400</div>
<div class="a" style="left:390.4px;top:112px;width:1px;height:2px;background:#5a5a5a"></div>
<div class="a" style="left:395.3px;top:112px;width:1px;height:2px;background:#5a5a5a"></div>
<div class="a" style="left:400.1px;top:112px;width:1px;height:2px;background:#5a5a5a"></div>
<div class="a" style="left:405.0px;top:111px;width:1px;height:3px;background:#5a5a5a"></div>
<div class="a" style="left:409.8px;top:112px;width:1px;height:2px;background:#5a5a5a"></div>
<div class="a" style="left:414.6px;top:112px;width:1px;height:2px;background:#5a5a5a"></div>
<div class="a" style="left:419.5px;top:112px;width:1px;height:2px;background:#5a5a5a"></div>
<div class="a" style="left:424.3px;top:97px;width:1px;height:17px;background:#575757"></div>
<div class="rn" style="left:426.3px">1600</div>
<div class="a" style="left:429.2px;top:112px;width:1px;height:2px;background:#5a5a5a"></div>
<div class="a" style="left:434.0px;top:112px;width:1px;height:2px;background:#5a5a5a"></div>
<div class="a" style="left:438.9px;top:112px;width:1px;height:2px;background:#5a5a5a"></div>
<div class="a" style="left:443.7px;top:111px;width:1px;height:3px;background:#5a5a5a"></div>
<div class="a" style="left:448.5px;top:112px;width:1px;height:2px;background:#5a5a5a"></div>
<div class="a" style="left:453.4px;top:112px;width:1px;height:2px;background:#5a5a5a"></div>
<div class="a" style="left:458.2px;top:112px;width:1px;height:2px;background:#5a5a5a"></div>
<div class="a" style="left:463.1px;top:97px;width:1px;height:17px;background:#575757"></div>
<div class="rn" style="left:465.1px">1800</div>
<div class="a" style="left:467.9px;top:112px;width:1px;height:2px;background:#5a5a5a"></div>
<div class="a" style="left:472.7px;top:112px;width:1px;height:2px;background:#5a5a5a"></div>
<div class="a" style="left:477.6px;top:112px;width:1px;height:2px;background:#5a5a5a"></div>
<div class="a" style="left:482.4px;top:111px;width:1px;height:3px;background:#5a5a5a"></div>
<div class="a" style="left:487.3px;top:112px;width:1px;height:2px;background:#5a5a5a"></div>
<div class="a" style="left:492.1px;top:112px;width:1px;height:2px;background:#5a5a5a"></div>
<div class="a" style="left:496.9px;top:112px;width:1px;height:2px;background:#5a5a5a"></div>
<div class="a" style="left:501.8px;top:97px;width:1px;height:17px;background:#575757"></div>
<div class="rn" style="left:503.8px">2000</div>
<div class="a" style="left:506.6px;top:112px;width:1px;height:2px;background:#5a5a5a"></div>
<div class="a" style="left:511.5px;top:112px;width:1px;height:2px;background:#5a5a5a"></div>
<div class="a" style="left:516.3px;top:112px;width:1px;height:2px;background:#5a5a5a"></div>
<div class="a" style="left:521.2px;top:111px;width:1px;height:3px;background:#5a5a5a"></div>
<div class="a" style="left:526.0px;top:112px;width:1px;height:2px;background:#5a5a5a"></div>
<div class="a" style="left:530.8px;top:112px;width:1px;height:2px;background:#5a5a5a"></div>
<div class="a" style="left:535.7px;top:112px;width:1px;height:2px;background:#5a5a5a"></div>
<div class="a" style="left:540.5px;top:97px;width:1px;height:17px;background:#575757"></div>
<div class="rn" style="left:542.5px">2200</div>
<div class="a" style="left:545.4px;top:112px;width:1px;height:2px;background:#5a5a5a"></div>
<div class="a" style="left:550.2px;top:112px;width:1px;height:2px;background:#5a5a5a"></div>
<div class="a" style="left:555.0px;top:112px;width:1px;height:2px;background:#5a5a5a"></div>
<div class="a" style="left:559.9px;top:111px;width:1px;height:3px;background:#5a5a5a"></div>
<div class="a" style="left:564.7px;top:112px;width:1px;height:2px;background:#5a5a5a"></div>
<div class="a" style="left:569.6px;top:112px;width:1px;height:2px;background:#5a5a5a"></div>
<div class="a" style="left:574.4px;top:112px;width:1px;height:2px;background:#5a5a5a"></div>
<div class="a" style="left:579.2px;top:97px;width:1px;height:17px;background:#575757"></div>
<div class="rn" style="left:581.2px">2400</div>
<div class="a" style="left:584.1px;top:112px;width:1px;height:2px;background:#5a5a5a"></div>
<div class="a" style="left:588.9px;top:112px;width:1px;height:2px;background:#5a5a5a"></div>
<div class="a" style="left:593.8px;top:112px;width:1px;height:2px;background:#5a5a5a"></div>
<div class="a" style="left:598.6px;top:111px;width:1px;height:3px;background:#5a5a5a"></div>
<div class="a" style="left:603.5px;top:112px;width:1px;height:2px;background:#5a5a5a"></div>
<div class="a" style="left:608.3px;top:112px;width:1px;height:2px;background:#5a5a5a"></div>
<div class="a" style="left:613.1px;top:112px;width:1px;height:2px;background:#5a5a5a"></div>
<div class="a" style="left:618.0px;top:97px;width:1px;height:17px;background:#575757"></div>
<div class="rn" style="left:620.0px">2600</div>
<div class="a" style="left:622.8px;top:112px;width:1px;height:2px;background:#5a5a5a"></div>
<div class="a" style="left:627.7px;top:112px;width:1px;height:2px;background:#5a5a5a"></div>
<div class="a" style="left:632.5px;top:112px;width:1px;height:2px;background:#5a5a5a"></div>
<div class="a" style="left:637.3px;top:111px;width:1px;height:3px;background:#5a5a5a"></div>
<div class="a" style="left:642.2px;top:112px;width:1px;height:2px;background:#5a5a5a"></div>
<div class="a" style="left:647.0px;top:112px;width:1px;height:2px;background:#5a5a5a"></div>
<div class="a" style="left:651.9px;top:112px;width:1px;height:2px;background:#5a5a5a"></div>
<div class="a" style="left:656.7px;top:97px;width:1px;height:17px;background:#575757"></div>
<div class="rn" style="left:658.7px">2800</div>
<div class="a" style="left:661.5px;top:112px;width:1px;height:2px;background:#5a5a5a"></div>
<div class="a" style="left:666.4px;top:112px;width:1px;height:2px;background:#5a5a5a"></div>
<div class="a" style="left:671.2px;top:112px;width:1px;height:2px;background:#5a5a5a"></div>
<div class="a" style="left:676.1px;top:111px;width:1px;height:3px;background:#5a5a5a"></div>
<div class="a" style="left:680.9px;top:112px;width:1px;height:2px;background:#5a5a5a"></div>
<div class="a" style="left:685.8px;top:112px;width:1px;height:2px;background:#5a5a5a"></div>
<div class="a" style="left:690.6px;top:112px;width:1px;height:2px;background:#5a5a5a"></div>
<div class="a" style="left:695.4px;top:97px;width:1px;height:17px;background:#575757"></div>
<div class="rn" style="left:697.4px">3000</div>
<div class="a" style="left:700.3px;top:112px;width:1px;height:2px;background:#5a5a5a"></div>
<div class="a" style="left:705.1px;top:112px;width:1px;height:2px;background:#5a5a5a"></div>
<div class="a" style="left:710.0px;top:112px;width:1px;height:2px;background:#5a5a5a"></div>
<div class="a" style="left:714.8px;top:111px;width:1px;height:3px;background:#5a5a5a"></div>
<div class="a" style="left:719.6px;top:112px;width:1px;height:2px;background:#5a5a5a"></div>
<div class="a" style="left:724.5px;top:112px;width:1px;height:2px;background:#5a5a5a"></div>
<div class="a" style="left:729.3px;top:112px;width:1px;height:2px;background:#5a5a5a"></div>
<div class="a" style="left:734.2px;top:97px;width:1px;height:17px;background:#575757"></div>
<div class="rn" style="left:736.2px">3200</div>
<div class="a" style="left:739.0px;top:112px;width:1px;height:2px;background:#5a5a5a"></div>
<div class="a" style="left:743.8px;top:112px;width:1px;height:2px;background:#5a5a5a"></div>
<div class="a" style="left:748.7px;top:112px;width:1px;height:2px;background:#5a5a5a"></div>
<div class="a" style="left:753.5px;top:111px;width:1px;height:3px;background:#5a5a5a"></div>
<div class="a" style="left:758.4px;top:112px;width:1px;height:2px;background:#5a5a5a"></div>
<div class="a" style="left:763.2px;top:112px;width:1px;height:2px;background:#5a5a5a"></div>
<div class="a" style="left:768.0px;top:112px;width:1px;height:2px;background:#5a5a5a"></div>
<div class="a" style="left:772.9px;top:97px;width:1px;height:17px;background:#575757"></div>
<div class="rn" style="left:774.9px">3400</div>
<div class="a" style="left:777.7px;top:112px;width:1px;height:2px;background:#5a5a5a"></div>
<div class="a" style="left:782.6px;top:112px;width:1px;height:2px;background:#5a5a5a"></div>
<div class="a" style="left:787.4px;top:112px;width:1px;height:2px;background:#5a5a5a"></div>
<div class="a" style="left:792.3px;top:111px;width:1px;height:3px;background:#5a5a5a"></div>
<div class="a" style="left:797.1px;top:112px;width:1px;height:2px;background:#5a5a5a"></div>
<div class="a" style="left:801.9px;top:112px;width:1px;height:2px;background:#5a5a5a"></div>
<div class="a" style="left:806.8px;top:112px;width:1px;height:2px;background:#5a5a5a"></div>
<div class="a" style="left:811.6px;top:97px;width:1px;height:17px;background:#575757"></div>
<div class="rn" style="left:813.6px">3600</div>
<div class="a" style="left:816.5px;top:112px;width:1px;height:2px;background:#5a5a5a"></div>
<div class="a" style="left:821.3px;top:112px;width:1px;height:2px;background:#5a5a5a"></div>
<div class="a" style="left:826.1px;top:112px;width:1px;height:2px;background:#5a5a5a"></div>
<div class="a" style="left:831.0px;top:111px;width:1px;height:3px;background:#5a5a5a"></div>
<div class="a" style="left:835.8px;top:112px;width:1px;height:2px;background:#5a5a5a"></div>
<div class="a" style="left:840.7px;top:112px;width:1px;height:2px;background:#5a5a5a"></div>
<div class="a" style="left:845.5px;top:112px;width:1px;height:2px;background:#5a5a5a"></div>
<div class="a" style="left:850.3px;top:97px;width:1px;height:17px;background:#575757"></div>
<div class="rn" style="left:852.3px">3800</div>
<div class="a" style="left:855.2px;top:112px;width:1px;height:2px;background:#5a5a5a"></div>
<div class="a" style="left:860.0px;top:112px;width:1px;height:2px;background:#5a5a5a"></div>
<div class="a" style="left:864.9px;top:112px;width:1px;height:2px;background:#5a5a5a"></div>
<div class="a" style="left:869.7px;top:111px;width:1px;height:3px;background:#5a5a5a"></div>
<div class="a" style="left:874.6px;top:112px;width:1px;height:2px;background:#5a5a5a"></div>
<div class="a" style="left:879.4px;top:112px;width:1px;height:2px;background:#5a5a5a"></div>
<div class="a" style="left:884.2px;top:112px;width:1px;height:2px;background:#5a5a5a"></div>
<div class="a" style="left:889.1px;top:97px;width:1px;height:17px;background:#575757"></div>
<div class="rn" style="left:891.1px">4000</div>
<div class="a" style="left:893.9px;top:112px;width:1px;height:2px;background:#5a5a5a"></div>
<div class="a" style="left:898.8px;top:112px;width:1px;height:2px;background:#5a5a5a"></div>
<div class="a" style="left:903.6px;top:112px;width:1px;height:2px;background:#5a5a5a"></div>
<div class="a" style="left:908.4px;top:111px;width:1px;height:3px;background:#5a5a5a"></div>
<div class="a" style="left:913.3px;top:112px;width:1px;height:2px;background:#5a5a5a"></div>
<div class="a" style="left:918.1px;top:112px;width:1px;height:2px;background:#5a5a5a"></div>
<div class="a" style="left:923.0px;top:112px;width:1px;height:2px;background:#5a5a5a"></div>
<div class="a" style="left:927.8px;top:97px;width:1px;height:17px;background:#575757"></div>
<div class="rn" style="left:929.8px">4200</div>
<div class="a" style="left:932.6px;top:112px;width:1px;height:2px;background:#5a5a5a"></div>
<div class="a" style="left:937.5px;top:112px;width:1px;height:2px;background:#5a5a5a"></div>
<div class="a" style="left:942.3px;top:112px;width:1px;height:2px;background:#5a5a5a"></div>
<div class="a" style="left:947.2px;top:111px;width:1px;height:3px;background:#5a5a5a"></div>
<div class="a" style="left:952.0px;top:112px;width:1px;height:2px;background:#5a5a5a"></div>
<div class="a" style="left:956.9px;top:112px;width:1px;height:2px;background:#5a5a5a"></div>
<div class="a" style="left:961.7px;top:112px;width:1px;height:2px;background:#5a5a5a"></div>
<div class="a" style="left:966.5px;top:97px;width:1px;height:17px;background:#575757"></div>
<div class="rn" style="left:968.5px">4400</div>
<div class="a" style="left:971.4px;top:112px;width:1px;height:2px;background:#5a5a5a"></div>
<div class="a" style="left:976.2px;top:112px;width:1px;height:2px;background:#5a5a5a"></div>
<div class="a" style="left:981.1px;top:112px;width:1px;height:2px;background:#5a5a5a"></div>
<div class="a" style="left:985.9px;top:111px;width:1px;height:3px;background:#5a5a5a"></div>
<div class="a" style="left:990.7px;top:112px;width:1px;height:2px;background:#5a5a5a"></div>
<div class="a" style="left:995.6px;top:112px;width:1px;height:2px;background:#5a5a5a"></div>
<div class="a" style="left:1000.4px;top:112px;width:1px;height:2px;background:#5a5a5a"></div>
<div class="a" style="left:0;top:0;width:1025px;height:716px;overflow:hidden">
<div class="a" style="left:78px;top:125.0px;width:16px;height:1px;background:#575757"></div>
<div class="vn" style="top:126.8px">0</div>
<div class="a" style="left:92px;top:129.8px;width:2px;height:1px;background:#5a5a5a"></div>
<div class="a" style="left:92px;top:134.7px;width:2px;height:1px;background:#5a5a5a"></div>
<div class="a" style="left:92px;top:139.5px;width:2px;height:1px;background:#5a5a5a"></div>
<div class="a" style="left:91px;top:144.4px;width:3px;height:1px;background:#5a5a5a"></div>
<div class="a" style="left:92px;top:149.2px;width:2px;height:1px;background:#5a5a5a"></div>
<div class="a" style="left:92px;top:154.0px;width:2px;height:1px;background:#5a5a5a"></div>
<div class="a" style="left:92px;top:158.9px;width:2px;height:1px;background:#5a5a5a"></div>
<div class="a" style="left:78px;top:163.7px;width:16px;height:1px;background:#575757"></div>
<div class="vn" style="top:165.5px">2<br>0<br>0</div>
<div class="a" style="left:92px;top:168.6px;width:2px;height:1px;background:#5a5a5a"></div>
<div class="a" style="left:92px;top:173.4px;width:2px;height:1px;background:#5a5a5a"></div>
<div class="a" style="left:92px;top:178.3px;width:2px;height:1px;background:#5a5a5a"></div>
<div class="a" style="left:91px;top:183.1px;width:3px;height:1px;background:#5a5a5a"></div>
<div class="a" style="left:92px;top:187.9px;width:2px;height:1px;background:#5a5a5a"></div>
<div class="a" style="left:92px;top:192.8px;width:2px;height:1px;background:#5a5a5a"></div>
<div class="a" style="left:92px;top:197.6px;width:2px;height:1px;background:#5a5a5a"></div>
<div class="a" style="left:78px;top:202.5px;width:16px;height:1px;background:#575757"></div>
<div class="vn" style="top:204.3px">4<br>0<br>0</div>
<div class="a" style="left:92px;top:207.3px;width:2px;height:1px;background:#5a5a5a"></div>
<div class="a" style="left:92px;top:212.1px;width:2px;height:1px;background:#5a5a5a"></div>
<div class="a" style="left:92px;top:217.0px;width:2px;height:1px;background:#5a5a5a"></div>
<div class="a" style="left:91px;top:221.8px;width:3px;height:1px;background:#5a5a5a"></div>
<div class="a" style="left:92px;top:226.7px;width:2px;height:1px;background:#5a5a5a"></div>
<div class="a" style="left:92px;top:231.5px;width:2px;height:1px;background:#5a5a5a"></div>
<div class="a" style="left:92px;top:236.3px;width:2px;height:1px;background:#5a5a5a"></div>
<div class="a" style="left:78px;top:241.2px;width:16px;height:1px;background:#575757"></div>
<div class="vn" style="top:243.0px">6<br>0<br>0</div>
<div class="a" style="left:92px;top:246.0px;width:2px;height:1px;background:#5a5a5a"></div>
<div class="a" style="left:92px;top:250.9px;width:2px;height:1px;background:#5a5a5a"></div>
<div class="a" style="left:92px;top:255.7px;width:2px;height:1px;background:#5a5a5a"></div>
<div class="a" style="left:91px;top:260.6px;width:3px;height:1px;background:#5a5a5a"></div>
<div class="a" style="left:92px;top:265.4px;width:2px;height:1px;background:#5a5a5a"></div>
<div class="a" style="left:92px;top:270.2px;width:2px;height:1px;background:#5a5a5a"></div>
<div class="a" style="left:92px;top:275.1px;width:2px;height:1px;background:#5a5a5a"></div>
<div class="a" style="left:78px;top:279.9px;width:16px;height:1px;background:#575757"></div>
<div class="vn" style="top:281.7px">8<br>0<br>0</div>
<div class="a" style="left:92px;top:284.8px;width:2px;height:1px;background:#5a5a5a"></div>
<div class="a" style="left:92px;top:289.6px;width:2px;height:1px;background:#5a5a5a"></div>
<div class="a" style="left:92px;top:294.4px;width:2px;height:1px;background:#5a5a5a"></div>
<div class="a" style="left:91px;top:299.3px;width:3px;height:1px;background:#5a5a5a"></div>
<div class="a" style="left:92px;top:304.1px;width:2px;height:1px;background:#5a5a5a"></div>
<div class="a" style="left:92px;top:309.0px;width:2px;height:1px;background:#5a5a5a"></div>
<div class="a" style="left:92px;top:313.8px;width:2px;height:1px;background:#5a5a5a"></div>
<div class="a" style="left:78px;top:318.6px;width:16px;height:1px;background:#575757"></div>
<div class="vn" style="top:320.4px">1<br>0<br>0<br>0</div>
<div class="a" style="left:92px;top:323.5px;width:2px;height:1px;background:#5a5a5a"></div>
<div class="a" style="left:92px;top:328.3px;width:2px;height:1px;background:#5a5a5a"></div>
<div class="a" style="left:92px;top:333.2px;width:2px;height:1px;background:#5a5a5a"></div>
<div class="a" style="left:91px;top:338.0px;width:3px;height:1px;background:#5a5a5a"></div>
<div class="a" style="left:92px;top:342.9px;width:2px;height:1px;background:#5a5a5a"></div>
<div class="a" style="left:92px;top:347.7px;width:2px;height:1px;background:#5a5a5a"></div>
<div class="a" style="left:92px;top:352.5px;width:2px;height:1px;background:#5a5a5a"></div>
<div class="a" style="left:78px;top:357.4px;width:16px;height:1px;background:#575757"></div>
<div class="vn" style="top:359.2px">1<br>2<br>0<br>0</div>
<div class="a" style="left:92px;top:362.2px;width:2px;height:1px;background:#5a5a5a"></div>
<div class="a" style="left:92px;top:367.1px;width:2px;height:1px;background:#5a5a5a"></div>
<div class="a" style="left:92px;top:371.9px;width:2px;height:1px;background:#5a5a5a"></div>
<div class="a" style="left:91px;top:376.7px;width:3px;height:1px;background:#5a5a5a"></div>
<div class="a" style="left:92px;top:381.6px;width:2px;height:1px;background:#5a5a5a"></div>
<div class="a" style="left:92px;top:386.4px;width:2px;height:1px;background:#5a5a5a"></div>
<div class="a" style="left:92px;top:391.3px;width:2px;height:1px;background:#5a5a5a"></div>
<div class="a" style="left:78px;top:396.1px;width:16px;height:1px;background:#575757"></div>
<div class="vn" style="top:397.9px">1<br>4<br>0<br>0</div>
<div class="a" style="left:92px;top:400.9px;width:2px;height:1px;background:#5a5a5a"></div>
<div class="a" style="left:92px;top:405.8px;width:2px;height:1px;background:#5a5a5a"></div>
<div class="a" style="left:92px;top:410.6px;width:2px;height:1px;background:#5a5a5a"></div>
<div class="a" style="left:91px;top:415.5px;width:3px;height:1px;background:#5a5a5a"></div>
<div class="a" style="left:92px;top:420.3px;width:2px;height:1px;background:#5a5a5a"></div>
<div class="a" style="left:92px;top:425.1px;width:2px;height:1px;background:#5a5a5a"></div>
<div class="a" style="left:92px;top:430.0px;width:2px;height:1px;background:#5a5a5a"></div>
<div class="a" style="left:78px;top:434.8px;width:16px;height:1px;background:#575757"></div>
<div class="vn" style="top:436.6px">1<br>6<br>0<br>0</div>
<div class="a" style="left:92px;top:439.7px;width:2px;height:1px;background:#5a5a5a"></div>
<div class="a" style="left:92px;top:444.5px;width:2px;height:1px;background:#5a5a5a"></div>
<div class="a" style="left:92px;top:449.4px;width:2px;height:1px;background:#5a5a5a"></div>
<div class="a" style="left:91px;top:454.2px;width:3px;height:1px;background:#5a5a5a"></div>
<div class="a" style="left:92px;top:459.0px;width:2px;height:1px;background:#5a5a5a"></div>
<div class="a" style="left:92px;top:463.9px;width:2px;height:1px;background:#5a5a5a"></div>
<div class="a" style="left:92px;top:468.7px;width:2px;height:1px;background:#5a5a5a"></div>
<div class="a" style="left:78px;top:473.6px;width:16px;height:1px;background:#575757"></div>
<div class="vn" style="top:475.4px">1<br>8<br>0<br>0</div>
<div class="a" style="left:92px;top:478.4px;width:2px;height:1px;background:#5a5a5a"></div>
<div class="a" style="left:92px;top:483.2px;width:2px;height:1px;background:#5a5a5a"></div>
<div class="a" style="left:92px;top:488.1px;width:2px;height:1px;background:#5a5a5a"></div>
<div class="a" style="left:91px;top:492.9px;width:3px;height:1px;background:#5a5a5a"></div>
<div class="a" style="left:92px;top:497.8px;width:2px;height:1px;background:#5a5a5a"></div>
<div class="a" style="left:92px;top:502.6px;width:2px;height:1px;background:#5a5a5a"></div>
<div class="a" style="left:92px;top:507.4px;width:2px;height:1px;background:#5a5a5a"></div>
<div class="a" style="left:78px;top:512.3px;width:16px;height:1px;background:#575757"></div>
<div class="vn" style="top:514.1px">2<br>0<br>0<br>0</div>
<div class="a" style="left:92px;top:517.1px;width:2px;height:1px;background:#5a5a5a"></div>
<div class="a" style="left:92px;top:522.0px;width:2px;height:1px;background:#5a5a5a"></div>
<div class="a" style="left:92px;top:526.8px;width:2px;height:1px;background:#5a5a5a"></div>
<div class="a" style="left:91px;top:531.7px;width:3px;height:1px;background:#5a5a5a"></div>
<div class="a" style="left:92px;top:536.5px;width:2px;height:1px;background:#5a5a5a"></div>
<div class="a" style="left:92px;top:541.3px;width:2px;height:1px;background:#5a5a5a"></div>
<div class="a" style="left:92px;top:546.2px;width:2px;height:1px;background:#5a5a5a"></div>
<div class="a" style="left:78px;top:551.0px;width:16px;height:1px;background:#575757"></div>
<div class="vn" style="top:552.8px">2<br>2<br>0<br>0</div>
<div class="a" style="left:92px;top:555.9px;width:2px;height:1px;background:#5a5a5a"></div>
<div class="a" style="left:92px;top:560.7px;width:2px;height:1px;background:#5a5a5a"></div>
<div class="a" style="left:92px;top:565.5px;width:2px;height:1px;background:#5a5a5a"></div>
<div class="a" style="left:91px;top:570.4px;width:3px;height:1px;background:#5a5a5a"></div>
<div class="a" style="left:92px;top:575.2px;width:2px;height:1px;background:#5a5a5a"></div>
<div class="a" style="left:92px;top:580.1px;width:2px;height:1px;background:#5a5a5a"></div>
<div class="a" style="left:92px;top:584.9px;width:2px;height:1px;background:#5a5a5a"></div>
<div class="a" style="left:78px;top:589.7px;width:16px;height:1px;background:#575757"></div>
<div class="vn" style="top:591.5px">2<br>4<br>0<br>0</div>
<div class="a" style="left:92px;top:594.6px;width:2px;height:1px;background:#5a5a5a"></div>
<div class="a" style="left:92px;top:599.4px;width:2px;height:1px;background:#5a5a5a"></div>
<div class="a" style="left:92px;top:604.3px;width:2px;height:1px;background:#5a5a5a"></div>
<div class="a" style="left:91px;top:609.1px;width:3px;height:1px;background:#5a5a5a"></div>
<div class="a" style="left:92px;top:614.0px;width:2px;height:1px;background:#5a5a5a"></div>
<div class="a" style="left:92px;top:618.8px;width:2px;height:1px;background:#5a5a5a"></div>
<div class="a" style="left:92px;top:623.6px;width:2px;height:1px;background:#5a5a5a"></div>
<div class="a" style="left:78px;top:628.5px;width:16px;height:1px;background:#575757"></div>
<div class="vn" style="top:630.3px">2<br>6<br>0<br>0</div>
<div class="a" style="left:92px;top:633.3px;width:2px;height:1px;background:#5a5a5a"></div>
<div class="a" style="left:92px;top:638.2px;width:2px;height:1px;background:#5a5a5a"></div>
<div class="a" style="left:92px;top:643.0px;width:2px;height:1px;background:#5a5a5a"></div>
<div class="a" style="left:91px;top:647.8px;width:3px;height:1px;background:#5a5a5a"></div>
<div class="a" style="left:92px;top:652.7px;width:2px;height:1px;background:#5a5a5a"></div>
<div class="a" style="left:92px;top:657.5px;width:2px;height:1px;background:#5a5a5a"></div>
<div class="a" style="left:92px;top:662.4px;width:2px;height:1px;background:#5a5a5a"></div>
<div class="a" style="left:78px;top:667.2px;width:16px;height:1px;background:#575757"></div>
<div class="vn" style="top:669.0px">2<br>8<br>0<br>0</div>
<div class="a" style="left:92px;top:672.0px;width:2px;height:1px;background:#5a5a5a"></div>
<div class="a" style="left:92px;top:676.9px;width:2px;height:1px;background:#5a5a5a"></div>
<div class="a" style="left:92px;top:681.7px;width:2px;height:1px;background:#5a5a5a"></div>
<div class="a" style="left:91px;top:686.6px;width:3px;height:1px;background:#5a5a5a"></div>
<div class="a" style="left:92px;top:691.4px;width:2px;height:1px;background:#5a5a5a"></div>
<div class="a" style="left:92px;top:696.3px;width:2px;height:1px;background:#5a5a5a"></div>
<div class="a" style="left:92px;top:701.1px;width:2px;height:1px;background:#5a5a5a"></div>
<div class="a" style="left:78px;top:705.9px;width:16px;height:1px;background:#575757"></div>
<div class="vn" style="top:707.7px">3<br>0<br>0<br>0</div>
<div class="a" style="left:92px;top:710.8px;width:2px;height:1px;background:#5a5a5a"></div>
<div class="a" style="left:92px;top:715.6px;width:2px;height:1px;background:#5a5a5a"></div>
</div>
<div class="a" style="left:79px;top:634px;width:12px;height:1px;background:#e0e0e0"></div>
<div class="a" style="left:94px;top:114px;width:912px;height:602px;background:#282828"></div>
<div class="a" style="left:1006px;top:96px;width:17px;height:620px;background:#474747"></div>
<svg style="left:1011px;top:105px" width="9" height="5" viewBox="0 0 9 5"><path d="M0.5 4.5 L4.5 0.8 L8.5 4.5" fill="none" stroke="#9a9a9a" stroke-width="1.1"/></svg>
<svg style="left:1011px;top:704px" width="9" height="5" viewBox="0 0 9 5"><path d="M0.5 0.5 L4.5 4.2 L8.5 0.5" fill="none" stroke="#9a9a9a" stroke-width="1.1"/></svg>
<div class="a" style="left:1008px;top:297px;width:13px;height:220px;background:#5d5d5d;border-radius:2px"></div>
<div class="a" style="left:78px;top:716px;width:945px;height:16px;background:#494949"></div>
<div class="a" style="left:78px;top:716px;width:46px;height:16px;background:#3e3e3e"></div>
<div class="a" style="left:80.4px;top:716.5px;font-family:'Liberation Sans';font-size:13px;line-height:15px;color:#ffffff;font-weight:bold;white-space:nowrap;transform-origin:0 0;transform:scaleX(0.9230);"><span>29.53%</span></div>
<div class="a" style="left:141px;top:717px;font-family:'Liberation Sans';font-size:11px;line-height:13px;color:#d0d0d0;font-weight:normal;white-space:nowrap;transform-origin:0 0;transform:scaleX(0.9870);"><span>4500 px x 3000 px (300 ppi)</span></div>
<svg style="left:295px;top:720px" width="5" height="9" viewBox="0 0 5 9"><path d="M0.5 0.5 L4.3 4.5 L0.5 8.5" fill="none" stroke="#aaaaaa" stroke-width="1.1"/></svg>
<svg style="left:314px;top:721px" width="5" height="8" viewBox="0 0 5 8"><path d="M4.3 0.5 L0.8 4 L4.3 7.5" fill="none" stroke="#777" stroke-width="1"/></svg>
<div class="a" style="left:534px;top:718px;width:244px;height:12px;background:#636363;border-radius:2px"></div>
<svg style="left:994px;top:721px" width="5" height="8" viewBox="0 0 5 8"><path d="M0.7 0.5 L4.2 4 L0.7 7.5" fill="none" stroke="#8a8a8a" stroke-width="1"/></svg>
<div class="a" style="left:1006px;top:716px;width:17px;height:16px;background:#4d4d4d"></div>
<div class="a" style="left:0;top:735px;width:1025px;height:2px;background:#bcbcbc"></div>
<div class="a" style="left:114px;top:125px;width:872px;height:581px;background:#dedede;overflow:hidden">
<svg style="left:0;top:0" width="872" height="581" viewBox="0 0 872 581">
<defs><filter id="nz" x="0" y="0" width="100%" height="100%"><feTurbulence type="fractalNoise" baseFrequency="0.6" numOctaves="2" seed="5"/><feColorMatrix type="matrix" values="1.8 0 0 0 -0.3  1.8 0 0 0 -0.3  1.8 0 0 0 -0.3  0 0 0 0 0.22"/></filter>
<radialGradient id="vg" cx="50%" cy="50%" r="75%"><stop offset="60%" stop-color="#000" stop-opacity="0"/><stop offset="100%" stop-color="#000" stop-opacity="0.03"/></radialGradient></defs>
<rect width="872" height="581" fill="#efefef"/>
<rect width="872" height="581" filter="url(#nz)"/>
<rect width="872" height="581" fill="url(#vg)"/>
<circle cx="282.4" cy="87.6" r="0.6" fill="#222" opacity="0.28"/><circle cx="318.9" cy="33.7" r="1.2" fill="#222" opacity="0.35"/><path d="M364.6 139.8 l2.7 1.1" stroke="#333" stroke-width="0.9" opacity="0.44"/><circle cx="547.1" cy="550.6" r="1.2" fill="#222" opacity="0.51"/><circle cx="192.8" cy="323.4" r="0.7" fill="#222" opacity="0.38"/><circle cx="102.7" cy="179.2" r="0.7" fill="#222" opacity="0.30"/><circle cx="163.8" cy="56.6" r="0.6" fill="#222" opacity="0.50"/><path d="M432.9 308.9 l1.3 2.7" stroke="#333" stroke-width="0.9" opacity="0.46"/><circle cx="156.8" cy="453.1" r="0.6" fill="#222" opacity="0.51"/><circle cx="763.1" cy="423.8" r="0.8" fill="#222" opacity="0.52"/><circle cx="446.4" cy="95.8" r="0.8" fill="#222" opacity="0.32"/><path d="M34.2 388.2 l2.6 4.0" stroke="#333" stroke-width="0.9" opacity="0.51"/><circle cx="518.3" cy="336.9" r="1.0" fill="#222" opacity="0.28"/><path d="M235.4 405.0 l-2.7 5.3" stroke="#333" stroke-width="0.9" opacity="0.28"/><circle cx="716.7" cy="165.4" r="1.0" fill="#222" opacity="0.65"/><circle cx="820.2" cy="206.5" r="1.2" fill="#222" opacity="0.30"/><path d="M669.9 75.1 l0.0 2.7" stroke="#333" stroke-width="0.9" opacity="0.43"/><path d="M350.2 161.4 l2.3 2.8" stroke="#333" stroke-width="0.9" opacity="0.62"/><circle cx="312.8" cy="513.7" r="0.7" fill="#222" opacity="0.32"/><circle cx="202.3" cy="135.6" r="1.0" fill="#222" opacity="0.62"/><circle cx="245.8" cy="84.6" r="1.2" fill="#222" opacity="0.42"/><circle cx="831.1" cy="401.2" r="1.2" fill="#222" opacity="0.68"/><circle cx="645.1" cy="265.3" r="1.2" fill="#222" opacity="0.43"/><path d="M90.3 368.5 l0.5 2.4" stroke="#333" stroke-width="0.9" opacity="0.34"/><circle cx="523.8" cy="59.5" r="1.2" fill="#222" opacity="0.32"/><circle cx="317.1" cy="14.8" r="0.7" fill="#222" opacity="0.53"/><circle cx="220.0" cy="201.8" r="0.8" fill="#222" opacity="0.46"/><circle cx="425.6" cy="568.1" r="1.0" fill="#222" opacity="0.47"/><circle cx="89.1" cy="199.1" r="0.8" fill="#222" opacity="0.47"/><circle cx="450.2" cy="119.2" r="1.2" fill="#222" opacity="0.41"/><path d="M797.1 440.5 l-1.8 2.5" stroke="#333" stroke-width="0.9" opacity="0.69"/><path d="M319.8 97.1 l1.5 2.5" stroke="#333" stroke-width="0.9" opacity="0.49"/><path d="M707.6 572.2 l-2.0 2.1" stroke="#333" stroke-width="0.9" opacity="0.61"/><path d="M451.4 206.6 l0.2 2.8" stroke="#333" stroke-width="0.9" opacity="0.70"/><circle cx="527.7" cy="200.0" r="0.8" fill="#222" opacity="0.68"/><circle cx="192.2" cy="131.8" r="0.7" fill="#222" opacity="0.40"/><circle cx="859.1" cy="354.6" r="0.6" fill="#222" opacity="0.47"/><path d="M697.3 49.3 l-2.8 2.8" stroke="#333" stroke-width="0.9" opacity="0.66"/><path d="M155.7 458.5 l-2.5 3.0" stroke="#333" stroke-width="0.9" opacity="0.29"/><circle cx="648.2" cy="49.3" r="0.7" fill="#222" opacity="0.33"/><circle cx="131.8" cy="525.7" r="0.7" fill="#222" opacity="0.53"/><circle cx="413.6" cy="544.7" r="0.7" fill="#222" opacity="0.50"/><path d="M12.4 564.1 l1.1 5.4" stroke="#333" stroke-width="0.9" opacity="0.49"/><circle cx="720.4" cy="122.6" r="0.8" fill="#222" opacity="0.35"/><circle cx="665.9" cy="189.4" r="1.2" fill="#222" opacity="0.44"/><path d="M793.5 205.5 l-0.3 5.3" stroke="#333" stroke-width="0.9" opacity="0.55"/><circle cx="765.8" cy="76.0" r="0.7" fill="#222" opacity="0.49"/><circle cx="383.8" cy="106.4" r="0.6" fill="#222" opacity="0.60"/><circle cx="123.4" cy="359.7" r="0.6" fill="#222" opacity="0.50"/><circle cx="452.0" cy="322.7" r="0.6" fill="#222" opacity="0.65"/><circle cx="166.8" cy="24.5" r="0.6" fill="#222" opacity="0.48"/><path d="M662.7 530.2 l-0.9 2.6" stroke="#333" stroke-width="0.9" opacity="0.40"/><circle cx="241.7" cy="295.2" r="1.0" fill="#222" opacity="0.48"/><path d="M456.2 508.9 l3.0 2.3" stroke="#333" stroke-width="0.9" opacity="0.67"/><circle cx="363.3" cy="228.0" r="0.8" fill="#222" opacity="0.28"/><circle cx="63.8" cy="389.0" r="0.6" fill="#222" opacity="0.65"/><circle cx="624.5" cy="383.6" r="0.7" fill="#222" opacity="0.36"/><circle cx="407.9" cy="433.8" r="0.6" fill="#222" opacity="0.43"/><path d="M863.2 483.7 l1.1 3.5" stroke="#333" stroke-width="0.9" opacity="0.57"/><circle cx="311.0" cy="53.6" r="0.8" fill="#222" opacity="0.26"/><circle cx="384.1" cy="10.5" r="0.8" fill="#222" opacity="0.48"/><circle cx="837.8" cy="65.6" r="0.7" fill="#222" opacity="0.69"/><circle cx="231.6" cy="23.0" r="0.7" fill="#222" opacity="0.37"/><circle cx="368.2" cy="529.5" r="0.8" fill="#222" opacity="0.43"/><circle cx="448.9" cy="287.4" r="0.8" fill="#222" opacity="0.29"/><circle cx="600.1" cy="247.1" r="0.6" fill="#222" opacity="0.37"/><circle cx="77.2" cy="151.4" r="1.2" fill="#222" opacity="0.64"/><circle cx="752.3" cy="263.6" r="0.8" fill="#222" opacity="0.70"/><circle cx="798.3" cy="361.2" r="0.6" fill="#222" opacity="0.49"/><path d="M95.4 93.8 l-1.6 3.8" stroke="#333" stroke-width="0.9" opacity="0.33"/><path d="M179.5 258.9 l-2.1 0.0" stroke="#333" stroke-width="0.9" opacity="0.37"/><circle cx="16.1" cy="293.8" r="0.7" fill="#222" opacity="0.48"/><circle cx="389.8" cy="382.5" r="1.0" fill="#222" opacity="0.55"/><path d="M775.0 563.8 l2.5 4.7" stroke="#333" stroke-width="0.9" opacity="0.56"/><path d="M616.3 369.5 l-1.8 1.0" stroke="#333" stroke-width="0.9" opacity="0.70"/><circle cx="545.4" cy="511.2" r="1.0" fill="#222" opacity="0.32"/><circle cx="733.6" cy="505.8" r="0.8" fill="#222" opacity="0.52"/><circle cx="39.4" cy="107.7" r="0.8" fill="#222" opacity="0.45"/><circle cx="838.7" cy="565.1" r="1.2" fill="#222" opacity="0.40"/><circle cx="769.4" cy="126.6" r="0.7" fill="#222" opacity="0.25"/><path d="M413.9 292.1 l5.1 1.5" stroke="#333" stroke-width="0.9" opacity="0.36"/><circle cx="125.5" cy="340.9" r="1.0" fill="#222" opacity="0.26"/><circle cx="203.0" cy="340.2" r="1.2" fill="#222" opacity="0.63"/><circle cx="778.5" cy="455.5" r="1.2" fill="#222" opacity="0.43"/><circle cx="858.7" cy="86.8" r="1.2" fill="#222" opacity="0.54"/><path d="M728.4 518.2 l3.7 1.7" stroke="#333" stroke-width="0.9" opacity="0.58"/><circle cx="439.8" cy="485.1" r="0.6" fill="#222" opacity="0.62"/><circle cx="778.5" cy="396.8" r="0.7" fill="#222" opacity="0.29"/><circle cx="555.6" cy="557.5" r="1.0" fill="#222" opacity="0.63"/><circle cx="547.4" cy="363.8" r="0.7" fill="#222" opacity="0.47"/><circle cx="695.6" cy="434.7" r="1.2" fill="#222" opacity="0.65"/><circle cx="458.7" cy="433.3" r="1.0" fill="#222" opacity="0.36"/><circle cx="231.6" cy="423.7" r="0.7" fill="#222" opacity="0.35"/><circle cx="401.4" cy="491.3" r="0.6" fill="#222" opacity="0.47"/><circle cx="668.8" cy="358.5" r="0.7" fill="#222" opacity="0.28"/><circle cx="221.4" cy="431.8" r="0.8" fill="#222" opacity="0.53"/><circle cx="420.7" cy="282.2" r="0.6" fill="#222" opacity="0.56"/><path d="M253.6 300.1 l-4.2 0.1" stroke="#333" stroke-width="0.9" opacity="0.46"/><circle cx="271.8" cy="49.9" r="1.0" fill="#222" opacity="0.26"/><circle cx="715.0" cy="562.5" r="1.0" fill="#222" opacity="0.70"/><circle cx="799.2" cy="540.6" r="0.6" fill="#222" opacity="0.51"/><circle cx="457.0" cy="553.5" r="0.7" fill="#222" opacity="0.52"/><path d="M243.8 65.5 l0.1 2.1" stroke="#333" stroke-width="0.9" opacity="0.35"/><path d="M3.1 285.7 l0.9 3.4" stroke="#333" stroke-width="0.9" opacity="0.43"/><path d="M105.4 192.5 l5.3 2.1" stroke="#333" stroke-width="0.9" opacity="0.59"/><circle cx="621.8" cy="523.8" r="0.8" fill="#222" opacity="0.36"/><circle cx="340.2" cy="505.5" r="0.6" fill="#222" opacity="0.41"/><circle cx="239.9" cy="28.0" r="0.6" fill="#222" opacity="0.27"/><circle cx="553.7" cy="86.5" r="0.8" fill="#222" opacity="0.45"/><path d="M674.2 456.2 l-2.3 5.2" stroke="#333" stroke-width="0.9" opacity="0.65"/><path d="M820.3 319.1 l0.8 5.0" stroke="#333" stroke-width="0.9" opacity="0.27"/><circle cx="562.0" cy="166.3" r="0.6" fill="#222" opacity="0.66"/><path d="M148.9 241.0 l-3.0 0.2" stroke="#333" stroke-width="0.9" opacity="0.38"/><circle cx="572.0" cy="174.8" r="1.2" fill="#222" opacity="0.55"/><circle cx="560.9" cy="43.7" r="1.2" fill="#222" opacity="0.66"/><circle cx="191.9" cy="526.5" r="1.0" fill="#222" opacity="0.44"/><circle cx="212.8" cy="101.5" r="1.2" fill="#222" opacity="0.29"/><circle cx="225.3" cy="330.9" r="0.6" fill="#222" opacity="0.59"/><path d="M360.9 304.5 l0.0 4.3" stroke="#333" stroke-width="0.9" opacity="0.37"/><path d="M314.0 399.0 l2.4 1.9" stroke="#333" stroke-width="0.9" opacity="0.53"/><circle cx="216.7" cy="232.3" r="1.0" fill="#222" opacity="0.44"/><path d="M710.1 562.4 l-3.7 1.3" stroke="#333" stroke-width="0.9" opacity="0.26"/><path d="M512.0 0.1 l-0.3 3.9" stroke="#333" stroke-width="0.9" opacity="0.67"/><circle cx="391.5" cy="455.0" r="0.7" fill="#222" opacity="0.32"/><path d="M594.8 547.0 l2.5 0.0" stroke="#333" stroke-width="0.9" opacity="0.29"/><circle cx="496.5" cy="21.8" r="0.8" fill="#222" opacity="0.68"/><circle cx="460.6" cy="254.1" r="0.6" fill="#222" opacity="0.29"/><circle cx="822.8" cy="111.4" r="0.8" fill="#222" opacity="0.35"/><circle cx="9.1" cy="175.2" r="1.0" fill="#222" opacity="0.38"/><circle cx="732.0" cy="140.8" r="1.2" fill="#222" opacity="0.36"/><circle cx="837.7" cy="409.4" r="0.8" fill="#222" opacity="0.27"/><circle cx="771.6" cy="376.0" r="0.6" fill="#222" opacity="0.37"/><path d="M806.7 131.8 l1.5 3.3" stroke="#333" stroke-width="0.9" opacity="0.56"/><circle cx="5.9" cy="169.7" r="1.2" fill="#222" opacity="0.28"/><circle cx="174.8" cy="445.0" r="0.7" fill="#222" opacity="0.35"/><circle cx="663.1" cy="171.4" r="1.2" fill="#222" opacity="0.47"/><circle cx="194.7" cy="242.3" r="0.6" fill="#222" opacity="0.68"/><circle cx="343.1" cy="123.7" r="1.2" fill="#222" opacity="0.31"/><path d="M52.4 228.5 l-3.2 0.7" stroke="#333" stroke-width="0.9" opacity="0.58"/><circle cx="161.8" cy="543.7" r="1.0" fill="#222" opacity="0.26"/><circle cx="330.2" cy="217.2" r="0.8" fill="#222" opacity="0.45"/><circle cx="68.2" cy="46.9" r="1.0" fill="#222" opacity="0.68"/><circle cx="840.8" cy="120.5" r="0.8" fill="#222" opacity="0.60"/><circle cx="701.0" cy="51.0" r="1.0" fill="#222" opacity="0.34"/><circle cx="389.2" cy="187.8" r="1.0" fill="#222" opacity="0.26"/><circle cx="707.9" cy="445.4" r="0.6" fill="#222" opacity="0.42"/><path d="M700.5 36.0 l1.5 2.7" stroke="#333" stroke-width="0.9" opacity="0.59"/><circle cx="835.1" cy="358.5" r="0.8" fill="#222" opacity="0.59"/><circle cx="805.9" cy="172.8" r="1.2" fill="#222" opacity="0.66"/><path d="M822.5 14.1 l0.5 5.1" stroke="#333" stroke-width="0.9" opacity="0.30"/><path d="M688.7 530.8 q-0.6 0.0 -3.2 2.1" fill="none" stroke="#888" stroke-width="0.6" opacity="0.14"/><path d="M7.6 540.9 q3.1 1.9 4.1 5.8" fill="none" stroke="#888" stroke-width="0.6" opacity="0.10"/><path d="M205.9 500.4 q1.5 2.8 0.9 7.6" fill="none" stroke="#888" stroke-width="0.6" opacity="0.15"/><path d="M446.4 227.6 q3.4 0.3 4.8 2.6" fill="none" stroke="#888" stroke-width="0.6" opacity="0.16"/><path d="M420.0 316.4 q3.4 0.3 4.9 2.7" fill="none" stroke="#888" stroke-width="0.6" opacity="0.09"/><path d="M62.9 362.9 q3.2 0.7 4.4 3.4" fill="none" stroke="#888" stroke-width="0.6" opacity="0.20"/><path d="M847.7 100.6 q3.6 0.2 5.3 2.3" fill="none" stroke="#888" stroke-width="0.6" opacity="0.19"/><path d="M204.9 312.9 q-1.9 1.5 -5.7 4.9" fill="none" stroke="#888" stroke-width="0.6" opacity="0.17"/><path d="M256.3 162.3 q2.5 0.7 3.0 3.4" fill="none" stroke="#888" stroke-width="0.6" opacity="0.11"/><path d="M383.2 107.9 q2.7 0.6 3.5 3.2" fill="none" stroke="#888" stroke-width="0.6" opacity="0.19"/><path d="M164.2 37.7 q2.6 0.6 3.1 3.2" fill="none" stroke="#888" stroke-width="0.6" opacity="0.14"/><path d="M566.5 58.4 q1.2 0.6 0.4 3.2" fill="none" stroke="#888" stroke-width="0.6" opacity="0.08"/><path d="M769.8 134.3 q1.4 1.6 0.8 5.2" fill="none" stroke="#888" stroke-width="0.6" opacity="0.19"/><path d="M203.1 29.3 q-0.2 2.8 -2.5 7.6" fill="none" stroke="#888" stroke-width="0.6" opacity="0.10"/><path d="M65.5 297.9 q3.8 0.8 5.6 3.5" fill="none" stroke="#888" stroke-width="0.6" opacity="0.17"/><path d="M579.7 3.7 q-0.5 2.3 -3.0 6.6" fill="none" stroke="#888" stroke-width="0.6" opacity="0.12"/><path d="M32.7 197.5 q5.5 -0.4 8.9 1.2" fill="none" stroke="#888" stroke-width="0.6" opacity="0.08"/><path d="M638.5 531.0 q-2.3 1.2 -6.6 4.3" fill="none" stroke="#888" stroke-width="0.6" opacity="0.13"/><path d="M324.2 360.8 q2.5 -0.6 3.1 0.8" fill="none" stroke="#888" stroke-width="0.6" opacity="0.14"/><path d="M421.6 237.1 q-1.8 1.1 -5.6 4.2" fill="none" stroke="#888" stroke-width="0.6" opacity="0.10"/><path d="M465.6 379.4 q1.7 1.2 1.5 4.4" fill="none" stroke="#888" stroke-width="0.6" opacity="0.20"/><path d="M582.3 242.8 q4.7 -0.4 7.4 1.2" fill="none" stroke="#888" stroke-width="0.6" opacity="0.19"/><path d="M361.1 10.6 q-1.9 1.6 -5.8 5.2" fill="none" stroke="#888" stroke-width="0.6" opacity="0.16"/><path d="M340.7 235.3 q-1.8 -0.5 -5.5 1.0" fill="none" stroke="#888" stroke-width="0.6" opacity="0.10"/><path d="M99.0 52.6 q0.4 1.5 -1.3 5.0" fill="none" stroke="#888" stroke-width="0.6" opacity="0.17"/><path d="M113.3 30.0 q4.5 0.7 7.1 3.4" fill="none" stroke="#888" stroke-width="0.6" opacity="0.13"/><path d="M499.5 538.7 q-0.4 0.5 -2.7 3.0" fill="none" stroke="#888" stroke-width="0.6" opacity="0.12"/><path d="M141.1 99.8 q3.6 -0.4 5.2 1.1" fill="none" stroke="#888" stroke-width="0.6" opacity="0.17"/><path d="M690.8 467.5 q3.3 2.3 4.7 6.5" fill="none" stroke="#888" stroke-width="0.6" opacity="0.09"/><path d="M796.0 182.7 q-0.1 2.2 -2.3 6.4" fill="none" stroke="#888" stroke-width="0.6" opacity="0.09"/><path d="M621.1 399.9 q-2.2 0.1 -6.4 2.3" fill="none" stroke="#888" stroke-width="0.6" opacity="0.18"/><path d="M541.6 357.2 q3.4 0.7 4.8 3.4" fill="none" stroke="#888" stroke-width="0.6" opacity="0.15"/><path d="M36.4 545.3 q3.3 0.2 4.5 2.4" fill="none" stroke="#888" stroke-width="0.6" opacity="0.10"/><path d="M846.4 473.9 q4.4 1.4 6.8 4.7" fill="none" stroke="#888" stroke-width="0.6" opacity="0.18"/><path d="M586.2 388.0 q2.4 1.3 2.8 4.5" fill="none" stroke="#888" stroke-width="0.6" opacity="0.13"/><path d="M740.3 452.1 q-0.1 1.2 -2.2 4.3" fill="none" stroke="#888" stroke-width="0.6" opacity="0.11"/><path d="M339.4 213.5 q1.0 1.0 -0.0 4.1" fill="none" stroke="#888" stroke-width="0.6" opacity="0.08"/><path d="M859.9 270.3 q1.6 2.3 1.1 6.6" fill="none" stroke="#888" stroke-width="0.6" opacity="0.18"/><path d="M729.5 470.9 q1.5 0.6 1.0 3.2" fill="none" stroke="#888" stroke-width="0.6" opacity="0.12"/><path d="M318.6 466.1 q1.0 2.5 -0.1 6.9" fill="none" stroke="#888" stroke-width="0.6" opacity="0.08"/><path d="M113.6 535.8 q3.0 2.1 4.0 6.1" fill="none" stroke="#888" stroke-width="0.6" opacity="0.09"/><path d="M655.8 519.9 q-0.8 2.4 -3.6 6.8" fill="none" stroke="#888" stroke-width="0.6" opacity="0.08"/><path d="M57.9 356.8 q-0.0 0.5 -2.1 3.0" fill="none" stroke="#888" stroke-width="0.6" opacity="0.10"/><path d="M772.3 167.3 q-2.2 1.2 -6.4 4.3" fill="none" stroke="#888" stroke-width="0.6" opacity="0.16"/><path d="M628.8 128.5 q-1.9 0.7 -5.8 3.3" fill="none" stroke="#888" stroke-width="0.6" opacity="0.11"/><path d="M282.4 356.5 q-1.7 -0.2 -5.5 1.7" fill="none" stroke="#888" stroke-width="0.6" opacity="0.11"/><path d="M840.9 278.9 q0.0 2.2 -1.9 6.4" fill="none" stroke="#888" stroke-width="0.6" opacity="0.11"/><path d="M324.6 115.6 q2.0 2.3 2.0 6.5" fill="none" stroke="#888" stroke-width="0.6" opacity="0.11"/><path d="M285.9 218.9 q-0.8 0.4 -3.6 2.8" fill="none" stroke="#888" stroke-width="0.6" opacity="0.17"/><path d="M42.4 498.7 q-1.8 -0.7 -5.7 0.6" fill="none" stroke="#888" stroke-width="0.6" opacity="0.14"/><path d="M600.6 520.6 q3.2 1.2 4.4 4.4" fill="none" stroke="#888" stroke-width="0.6" opacity="0.18"/><path d="M643.5 215.8 q2.0 1.4 2.0 4.8" fill="none" stroke="#888" stroke-width="0.6" opacity="0.10"/><path d="M288.5 47.3 q3.5 1.2 5.0 4.4" fill="none" stroke="#888" stroke-width="0.6" opacity="0.19"/><path d="M258.4 299.9 q3.5 2.6 4.9 7.3" fill="none" stroke="#888" stroke-width="0.6" opacity="0.18"/><path d="M809.6 520.4 q-1.5 1.8 -5.0 5.6" fill="none" stroke="#888" stroke-width="0.6" opacity="0.11"/><path d="M253.7 363.5 q1.7 1.5 1.3 5.0" fill="none" stroke="#888" stroke-width="0.6" opacity="0.09"/><path d="M425.9 355.9 q2.6 -0.8 3.3 0.5" fill="none" stroke="#888" stroke-width="0.6" opacity="0.15"/><path d="M264.9 303.9 q0.7 1.7 -0.6 5.4" fill="none" stroke="#888" stroke-width="0.6" opacity="0.12"/><path d="M116.6 212.8 q-0.7 0.0 -3.4 2.0" fill="none" stroke="#888" stroke-width="0.6" opacity="0.08"/><path d="M698.9 411.0 q1.3 0.7 0.5 3.3" fill="none" stroke="#888" stroke-width="0.6" opacity="0.10"/><path d="M580.3 156.7 q-2.7 1.5 -7.3 4.9" fill="none" stroke="#888" stroke-width="0.6" opacity="0.09"/><path d="M715.8 518.6 q0.1 2.1 -1.9 6.2" fill="none" stroke="#888" stroke-width="0.6" opacity="0.15"/><path d="M451.3 286.3 q2.3 -0.3 2.6 1.5" fill="none" stroke="#888" stroke-width="0.6" opacity="0.09"/><path d="M22.0 107.9 q4.7 1.0 7.4 4.1" fill="none" stroke="#888" stroke-width="0.6" opacity="0.09"/><path d="M534.2 381.6 q3.2 0.6 4.5 3.2" fill="none" stroke="#888" stroke-width="0.6" opacity="0.14"/><path d="M560.4 376.3 q1.9 2.2 1.8 6.4" fill="none" stroke="#888" stroke-width="0.6" opacity="0.14"/><path d="M55.6 363.7 q-2.7 -0.9 -7.3 0.1" fill="none" stroke="#888" stroke-width="0.6" opacity="0.14"/><path d="M469.5 218.0 q1.8 3.2 1.7 8.3" fill="none" stroke="#888" stroke-width="0.6" opacity="0.09"/><path d="M571.6 101.9 q-1.3 -1.0 -4.6 0.0" fill="none" stroke="#888" stroke-width="0.6" opacity="0.16"/><path d="M107.5 517.8 q-3.2 0.0 -8.4 2.0" fill="none" stroke="#888" stroke-width="0.6" opacity="0.11"/><path d="M45.8 369.4 q-0.9 2.0 -3.8 6.0" fill="none" stroke="#888" stroke-width="0.6" opacity="0.19"/><path d="M847.5 171.8 q-3.1 -0.1 -8.2 1.9" fill="none" stroke="#888" stroke-width="0.6" opacity="0.09"/><path d="M442.5 98.6 q-2.8 0.2 -7.7 2.4" fill="none" stroke="#888" stroke-width="0.6" opacity="0.10"/><path d="M138.8 531.6 q3.2 0.5 4.4 3.0" fill="none" stroke="#888" stroke-width="0.6" opacity="0.15"/><path d="M330.9 495.0 q-3.3 0.1 -8.6 2.2" fill="none" stroke="#888" stroke-width="0.6" opacity="0.18"/><path d="M467.7 274.3 q0.9 0.5 -0.3 3.0" fill="none" stroke="#888" stroke-width="0.6" opacity="0.08"/><path d="M833.4 135.9 q-2.6 0.4 -7.2 2.7" fill="none" stroke="#888" stroke-width="0.6" opacity="0.13"/><path d="M510.4 328.4 q2.4 -0.2 2.7 1.6" fill="none" stroke="#888" stroke-width="0.6" opacity="0.09"/><path d="M542.4 94.0 q-2.6 -0.7 -7.2 0.5" fill="none" stroke="#888" stroke-width="0.6" opacity="0.08"/><path d="M120.7 373.9 q2.7 -0.8 3.4 0.5" fill="none" stroke="#888" stroke-width="0.6" opacity="0.09"/><path d="M746.9 442.6 q4.5 1.6 7.1 5.1" fill="none" stroke="#888" stroke-width="0.6" opacity="0.14"/><path d="M579.2 511.1 q-1.6 1.5 -5.2 5.0" fill="none" stroke="#888" stroke-width="0.6" opacity="0.13"/><path d="M215.0 118.0 q5.3 -0.5 8.6 0.9" fill="none" stroke="#888" stroke-width="0.6" opacity="0.19"/><path d="M657.3 50.8 q-1.4 1.4 -4.8 4.8" fill="none" stroke="#888" stroke-width="0.6" opacity="0.14"/><path d="M115.7 460.1 q-0.1 1.1 -2.1 4.3" fill="none" stroke="#888" stroke-width="0.6" opacity="0.12"/><path d="M227.7 203.9 q-0.6 -0.6 -3.2 0.7" fill="none" stroke="#888" stroke-width="0.6" opacity="0.17"/><path d="M793.8 446.9 q0.1 1.8 -1.8 5.6" fill="none" stroke="#888" stroke-width="0.6" opacity="0.11"/><path d="M650.2 458.4 q4.0 -0.7 6.1 0.6" fill="none" stroke="#888" stroke-width="0.6" opacity="0.09"/><path d="M408.9 28.0 q0.2 2.6 -1.5 7.1" fill="none" stroke="#888" stroke-width="0.6" opacity="0.18"/><path d="M501.0 166.8 q1.6 2.0 1.2 6.0" fill="none" stroke="#888" stroke-width="0.6" opacity="0.11"/><path d="M654.5 31.4 q1.8 0.6 1.6 3.2" fill="none" stroke="#888" stroke-width="0.6" opacity="0.16"/><path d="M719.7 561.9 q-0.3 3.2 -2.5 8.4" fill="none" stroke="#888" stroke-width="0.6" opacity="0.14"/><path d="M504.0 92.3 q-2.6 1.4 -7.2 4.7" fill="none" stroke="#888" stroke-width="0.6" opacity="0.11"/><path d="M144.6 545.4 q-1.2 1.0 -4.4 4.0" fill="none" stroke="#888" stroke-width="0.6" opacity="0.20"/><path d="M489.4 60.7 q1.9 0.5 1.9 3.1" fill="none" stroke="#888" stroke-width="0.6" opacity="0.19"/><path d="M777.7 433.0 q1.8 2.3 1.7 6.7" fill="none" stroke="#888" stroke-width="0.6" opacity="0.12"/><path d="M264.3 248.7 q0.7 1.0 -0.6 4.0" fill="none" stroke="#888" stroke-width="0.6" opacity="0.20"/><path d="M550.0 548.4 q4.0 0.3 6.0 2.5" fill="none" stroke="#888" stroke-width="0.6" opacity="0.16"/><path d="M527.9 19.7 q0.2 2.0 -1.6 5.9" fill="none" stroke="#888" stroke-width="0.6" opacity="0.18"/><path d="M392.7 321.7 q2.5 1.5 3.0 4.9" fill="none" stroke="#888" stroke-width="0.6" opacity="0.16"/><path d="M224.3 134.2 q2.7 2.0 3.4 5.9" fill="none" stroke="#888" stroke-width="0.6" opacity="0.16"/><path d="M442.7 155.4 q-1.9 1.8 -5.7 5.5" fill="none" stroke="#888" stroke-width="0.6" opacity="0.15"/><path d="M630.7 566.3 q-1.1 1.5 -4.3 5.1" fill="none" stroke="#888" stroke-width="0.6" opacity="0.12"/><path d="M206.0 555.3 q4.0 2.2 6.0 6.3" fill="none" stroke="#888" stroke-width="0.6" opacity="0.20"/><path d="M143.5 382.2 q2.6 0.1 3.2 2.3" fill="none" stroke="#888" stroke-width="0.6" opacity="0.10"/><path d="M263.4 172.8 q2.2 0.4 2.4 2.8" fill="none" stroke="#888" stroke-width="0.6" opacity="0.19"/><path d="M244.9 514.3 q1.2 0.5 0.3 3.1" fill="none" stroke="#888" stroke-width="0.6" opacity="0.18"/><path d="M380.7 129.2 q-1.4 -0.9 -4.8 0.3" fill="none" stroke="#888" stroke-width="0.6" opacity="0.08"/><path d="M224.3 428.9 q3.2 -1.0 4.5 0.1" fill="none" stroke="#888" stroke-width="0.6" opacity="0.18"/><path d="M611.4 341.3 q-0.8 2.6 -3.6 7.2" fill="none" stroke="#888" stroke-width="0.6" opacity="0.16"/><path d="M569.0 509.9 q-0.4 1.9 -2.8 5.9" fill="none" stroke="#888" stroke-width="0.6" opacity="0.11"/><path d="M158.3 72.2 q1.5 1.2 1.0 4.5" fill="none" stroke="#888" stroke-width="0.6" opacity="0.16"/><path d="M780.2 140.8 q2.1 2.5 2.2 6.9" fill="none" stroke="#888" stroke-width="0.6" opacity="0.10"/><path d="M740.7 280.5 q5.1 -0.7 8.1 0.5" fill="none" stroke="#888" stroke-width="0.6" opacity="0.14"/><path d="M576.5 507.2 q-1.3 -0.2 -4.7 1.6" fill="none" stroke="#888" stroke-width="0.6" opacity="0.08"/><path d="M725.4 527.7 q3.1 -0.3 4.3 1.5" fill="none" stroke="#888" stroke-width="0.6" opacity="0.11"/><path d="M624.5 552.7 q3.1 0.5 4.1 3.0" fill="none" stroke="#888" stroke-width="0.6" opacity="0.18"/><path d="M398.3 119.1 q1.1 0.5 0.2 3.1" fill="none" stroke="#888" stroke-width="0.6" opacity="0.18"/><path d="M322.6 199.2 q-1.0 1.1 -4.0 4.2" fill="none" stroke="#888" stroke-width="0.6" opacity="0.20"/><path d="M160.3 298.5 q-2.6 -0.2 -7.2 1.5" fill="none" stroke="#888" stroke-width="0.6" opacity="0.15"/><path d="M556.0 146.7 q1.6 0.6 1.2 3.1" fill="none" stroke="#888" stroke-width="0.6" opacity="0.09"/><path d="M798.3 365.2 q-0.7 1.8 -3.4 5.5" fill="none" stroke="#888" stroke-width="0.6" opacity="0.09"/><path d="M264.6 232.7 q-3.4 -0.4 -8.7 1.3" fill="none" stroke="#888" stroke-width="0.6" opacity="0.20"/><path d="M837.9 268.5 q4.7 1.1 7.5 4.2" fill="none" stroke="#888" stroke-width="0.6" opacity="0.09"/><path d="M696.2 112.2 q-0.6 2.3 -3.2 6.6" fill="none" stroke="#888" stroke-width="0.6" opacity="0.18"/><path d="M127.5 387.0 q-2.3 1.0 -6.7 3.9" fill="none" stroke="#888" stroke-width="0.6" opacity="0.13"/><path d="M868.6 441.5 q-0.7 2.4 -3.5 6.8" fill="none" stroke="#888" stroke-width="0.6" opacity="0.14"/><path d="M683.3 133.9 q-1.1 1.9 -4.3 5.7" fill="none" stroke="#888" stroke-width="0.6" opacity="0.20"/><path d="M591.9 279.8 q-2.2 1.2 -6.4 4.5" fill="none" stroke="#888" stroke-width="0.6" opacity="0.12"/><path d="M570.6 186.1 q1.2 2.4 0.3 6.7" fill="none" stroke="#888" stroke-width="0.6" opacity="0.09"/><path d="M782.2 88.7 q2.5 1.2 3.1 4.3" fill="none" stroke="#888" stroke-width="0.6" opacity="0.09"/><path d="M492.3 188.7 q-2.0 -0.4 -6.1 1.1" fill="none" stroke="#888" stroke-width="0.6" opacity="0.12"/><path d="M507.9 381.9 q2.4 0.1 2.7 2.1" fill="none" stroke="#888" stroke-width="0.6" opacity="0.12"/><path d="M530.4 336.1 q-0.8 -0.1 -3.7 1.8" fill="none" stroke="#888" stroke-width="0.6" opacity="0.13"/><path d="M684.4 121.2 q1.9 2.0 1.9 5.9" fill="none" stroke="#888" stroke-width="0.6" opacity="0.15"/><path d="M600.0 567.7 q5.0 0.2 8.1 2.4" fill="none" stroke="#888" stroke-width="0.6" opacity="0.15"/><path d="M555.1 172.6 q1.0 1.1 0.1 4.3" fill="none" stroke="#888" stroke-width="0.6" opacity="0.09"/><path d="M731.9 390.0 q2.7 -0.3 3.5 1.3" fill="none" stroke="#888" stroke-width="0.6" opacity="0.13"/><path d="M721.2 275.0 q0.5 1.9 -1.1 5.8" fill="none" stroke="#888" stroke-width="0.6" opacity="0.19"/><path d="M610.8 143.3 q3.9 0.6 5.7 3.3" fill="none" stroke="#888" stroke-width="0.6" opacity="0.17"/><path d="M139.8 186.3 q-0.7 1.4 -3.5 4.9" fill="none" stroke="#888" stroke-width="0.6" opacity="0.12"/><path d="M406.1 247.4 q-2.5 -1.0 -7.1 0.0" fill="none" stroke="#888" stroke-width="0.6" opacity="0.10"/><path d="M314.2 375.6 q2.6 -0.9 3.3 0.2" fill="none" stroke="#888" stroke-width="0.6" opacity="0.17"/><path d="M871.1 469.8 q3.8 -0.1 5.6 1.7" fill="none" stroke="#888" stroke-width="0.6" opacity="0.17"/><path d="M126.0 124.0 q1.5 0.8 1.0 3.6" fill="none" stroke="#888" stroke-width="0.6" opacity="0.09"/><path d="M574.7 198.3 q-1.4 1.0 -4.9 4.1" fill="none" stroke="#888" stroke-width="0.6" opacity="0.19"/><path d="M247.8 198.7 q2.2 0.2 2.3 2.4" fill="none" stroke="#888" stroke-width="0.6" opacity="0.11"/><path d="M309.7 286.9 q3.2 2.9 4.4 7.7" fill="none" stroke="#888" stroke-width="0.6" opacity="0.18"/><path d="M300.7 118.3 q1.0 0.9 0.1 3.7" fill="none" stroke="#888" stroke-width="0.6" opacity="0.10"/><path d="M621.9 74.1 q-0.8 -0.8 -3.5 0.3" fill="none" stroke="#888" stroke-width="0.6" opacity="0.20"/><path d="M347.8 322.0 q1.9 2.1 1.9 6.2" fill="none" stroke="#888" stroke-width="0.6" opacity="0.13"/><path d="M94.6 27.0 q-1.5 0.6 -5.0 3.1" fill="none" stroke="#888" stroke-width="0.6" opacity="0.17"/><path d="M52.4 291.0 q0.6 1.6 -0.7 5.2" fill="none" stroke="#888" stroke-width="0.6" opacity="0.10"/><path d="M587.5 400.4 q-0.6 -0.3 -3.2 1.3" fill="none" stroke="#888" stroke-width="0.6" opacity="0.08"/><path d="M552.5 363.3 q4.0 0.8 6.0 3.6" fill="none" stroke="#888" stroke-width="0.6" opacity="0.18"/><path d="M367.6 58.5 q-0.5 -0.7 -3.0 0.7" fill="none" stroke="#888" stroke-width="0.6" opacity="0.18"/><path d="M120.9 179.7 q-1.5 2.2 -5.0 6.5" fill="none" stroke="#888" stroke-width="0.6" opacity="0.10"/><path d="M29.9 11.8 q0.3 2.2 -1.3 6.3" fill="none" stroke="#888" stroke-width="0.6" opacity="0.19"/><path d="M434.1 303.4 q-2.3 1.0 -6.5 4.0" fill="none" stroke="#888" stroke-width="0.6" opacity="0.13"/><path d="M606.7 235.1 q4.5 -0.3 6.9 1.5" fill="none" stroke="#888" stroke-width="0.6" opacity="0.15"/><path d="M866.0 383.1 q4.4 0.8 6.7 3.6" fill="none" stroke="#888" stroke-width="0.6" opacity="0.15"/><path d="M72.3 274.3 q-2.2 0.1 -6.4 2.2" fill="none" stroke="#888" stroke-width="0.6" opacity="0.13"/><path d="M8.1 388.9 q-3.1 -0.8 -8.1 0.3" fill="none" stroke="#888" stroke-width="0.6" opacity="0.11"/><path d="M105.8 274.4 q3.1 1.4 4.2 4.9" fill="none" stroke="#888" stroke-width="0.6" opacity="0.13"/><path d="M648.9 536.1 q2.5 2.4 3.1 6.8" fill="none" stroke="#888" stroke-width="0.6" opacity="0.16"/><path d="M126.3 441.2 q2.9 1.5 3.8 5.1" fill="none" stroke="#888" stroke-width="0.6" opacity="0.14"/><path d="M583.8 517.1 q-0.6 -0.6 -3.2 0.9" fill="none" stroke="#888" stroke-width="0.6" opacity="0.08"/><path d="M52.8 513.2 q-0.9 1.8 -3.7 5.6" fill="none" stroke="#888" stroke-width="0.6" opacity="0.13"/><path d="M272.5 348.7 q-3.0 -0.5 -7.9 1.1" fill="none" stroke="#888" stroke-width="0.6" opacity="0.15"/><path d="M275.8 551.2 q-0.9 1.2 -3.8 4.4" fill="none" stroke="#888" stroke-width="0.6" opacity="0.10"/><path d="M842.7 67.8 q-1.0 -0.7 -3.9 0.6" fill="none" stroke="#888" stroke-width="0.6" opacity="0.18"/><path d="M415.9 452.1 q1.3 1.3 0.7 4.6" fill="none" stroke="#888" stroke-width="0.6" opacity="0.17"/><path d="M291.1 162.6 q-0.3 2.2 -2.6 6.4" fill="none" stroke="#888" stroke-width="0.6" opacity="0.18"/><path d="M523.1 505.2 q-0.0 0.2 -2.0 2.3" fill="none" stroke="#888" stroke-width="0.6" opacity="0.10"/><path d="M726.0 339.7 q-1.2 -0.8 -4.5 0.3" fill="none" stroke="#888" stroke-width="0.6" opacity="0.13"/><path d="M328.0 448.2 q3.1 0.9 4.2 3.8" fill="none" stroke="#888" stroke-width="0.6" opacity="0.16"/><path d="M280.4 155.7 q4.8 1.0 7.5 4.0" fill="none" stroke="#888" stroke-width="0.6" opacity="0.17"/><path d="M682.9 167.6 q4.8 0.8 7.5 3.6" fill="none" stroke="#888" stroke-width="0.6" opacity="0.20"/><path d="M128.2 566.7 q-1.5 0.9 -5.1 3.7" fill="none" stroke="#888" stroke-width="0.6" opacity="0.17"/><path d="M436.0 310.6 q0.6 1.9 -0.7 5.9" fill="none" stroke="#888" stroke-width="0.6" opacity="0.13"/><path d="M686.9 419.6 q-1.4 -0.9 -4.8 0.3" fill="none" stroke="#888" stroke-width="0.6" opacity="0.09"/><path d="M344.9 411.5 q-2.2 -0.2 -6.3 1.5" fill="none" stroke="#888" stroke-width="0.6" opacity="0.08"/><path d="M335.7 314.1 q0.7 1.5 -0.6 5.1" fill="none" stroke="#888" stroke-width="0.6" opacity="0.09"/><path d="M347.2 302.7 q3.7 1.9 5.5 5.8" fill="none" stroke="#888" stroke-width="0.6" opacity="0.12"/><path d="M441.4 117.3 q2.4 0.1 2.8 2.2" fill="none" stroke="#888" stroke-width="0.6" opacity="0.18"/><path d="M252.7 335.7 q2.6 2.5 3.3 6.9" fill="none" stroke="#888" stroke-width="0.6" opacity="0.18"/><path d="M214.8 536.0 q1.1 3.1 0.2 8.2" fill="none" stroke="#888" stroke-width="0.6" opacity="0.12"/><path d="M404.1 47.5 q1.9 0.3 1.7 2.7" fill="none" stroke="#888" stroke-width="0.6" opacity="0.11"/><path d="M529.4 54.7 q4.3 1.5 6.6 4.9" fill="none" stroke="#888" stroke-width="0.6" opacity="0.15"/><path d="M511.6 124.1 q-1.3 -0.5 -4.6 1.1" fill="none" stroke="#888" stroke-width="0.6" opacity="0.09"/><path d="M389.7 344.6 q0.4 0.8 -1.3 3.6" fill="none" stroke="#888" stroke-width="0.6" opacity="0.18"/><path d="M295.5 577.9 q1.6 0.5 1.2 2.9" fill="none" stroke="#888" stroke-width="0.6" opacity="0.08"/><path d="M322.3 409.9 q1.2 3.0 0.3 8.1" fill="none" stroke="#888" stroke-width="0.6" opacity="0.19"/><path d="M752.5 371.7 q-2.5 -0.1 -7.0 1.8" fill="none" stroke="#888" stroke-width="0.6" opacity="0.09"/><path d="M277.9 135.5 q5.1 0.2 8.2 2.4" fill="none" stroke="#888" stroke-width="0.6" opacity="0.14"/><path d="M159.3 493.7 q1.9 1.0 1.7 4.1" fill="none" stroke="#888" stroke-width="0.6" opacity="0.17"/><path d="M150.1 547.1 q-0.6 -0.7 -3.3 0.6" fill="none" stroke="#888" stroke-width="0.6" opacity="0.15"/><path d="M24.2 534.0 q3.1 1.2 4.2 4.4" fill="none" stroke="#888" stroke-width="0.6" opacity="0.17"/><path d="M664.2 280.9 q3.3 -0.2 4.7 1.5" fill="none" stroke="#888" stroke-width="0.6" opacity="0.08"/><path d="M173.5 434.7 q0.2 1.7 -1.6 5.4" fill="none" stroke="#888" stroke-width="0.6" opacity="0.16"/><path d="M410.5 216.0 q1.9 1.5 1.8 4.9" fill="none" stroke="#888" stroke-width="0.6" opacity="0.13"/><path d="M384.9 469.2 q-3.0 0.1 -8.1 2.2" fill="none" stroke="#888" stroke-width="0.6" opacity="0.14"/><path d="M795.8 464.1 q4.5 0.9 7.0 3.8" fill="none" stroke="#888" stroke-width="0.6" opacity="0.09"/><path d="M539.5 216.8 q-1.7 1.7 -5.4 5.4" fill="none" stroke="#888" stroke-width="0.6" opacity="0.19"/><path d="M807.4 223.7 q2.7 -0.9 3.4 0.2" fill="none" stroke="#888" stroke-width="0.6" opacity="0.20"/><path d="M281.3 135.9 q3.4 -0.1 4.9 1.8" fill="none" stroke="#888" stroke-width="0.6" opacity="0.12"/><path d="M641.8 104.7 q1.6 3.1 1.3 8.2" fill="none" stroke="#888" stroke-width="0.6" opacity="0.13"/><path d="M130.3 243.0 q2.1 0.1 2.3 2.2" fill="none" stroke="#888" stroke-width="0.6" opacity="0.15"/><path d="M258.6 467.2 q2.2 0.3 2.5 2.7" fill="none" stroke="#888" stroke-width="0.6" opacity="0.13"/><path d="M420.7 89.1 q0.9 2.4 -0.3 6.8" fill="none" stroke="#888" stroke-width="0.6" opacity="0.17"/><path d="M806.8 325.3 q-0.6 -0.1 -3.2 1.8" fill="none" stroke="#888" stroke-width="0.6" opacity="0.17"/><path d="M846.5 251.0 q2.5 0.6 3.0 3.2" fill="none" stroke="#888" stroke-width="0.6" opacity="0.11"/><path d="M340.2 241.5 q4.5 0.9 7.0 3.9" fill="none" stroke="#888" stroke-width="0.6" opacity="0.20"/><path d="M125.9 371.7 q1.5 2.0 1.1 5.9" fill="none" stroke="#888" stroke-width="0.6" opacity="0.14"/><path d="M386.3 458.7 q-1.3 -0.6 -4.6 0.8" fill="none" stroke="#888" stroke-width="0.6" opacity="0.12"/><path d="M35.4 237.6 q2.3 0.6 2.6 3.1" fill="none" stroke="#888" stroke-width="0.6" opacity="0.18"/><path d="M454.9 133.9 q3.8 0.7 5.6 3.5" fill="none" stroke="#888" stroke-width="0.6" opacity="0.18"/><path d="M775.5 424.6 q-0.5 0.4 -3.0 2.8" fill="none" stroke="#888" stroke-width="0.6" opacity="0.10"/><path d="M584.2 365.1 q3.0 0.4 4.0 2.8" fill="none" stroke="#888" stroke-width="0.6" opacity="0.08"/><path d="M603.6 301.9 q-2.7 1.0 -7.5 4.1" fill="none" stroke="#888" stroke-width="0.6" opacity="0.14"/><path d="M303.1 163.7 q-0.8 2.9 -3.7 7.9" fill="none" stroke="#888" stroke-width="0.6" opacity="0.09"/><path d="M357.1 443.3 q4.2 0.4 6.4 2.8" fill="none" stroke="#888" stroke-width="0.6" opacity="0.11"/><path d="M491.0 572.7 q4.6 -0.6 7.2 0.8" fill="none" stroke="#888" stroke-width="0.6" opacity="0.15"/><path d="M748.2 206.9 q-3.3 -0.1 -8.6 1.9" fill="none" stroke="#888" stroke-width="0.6" opacity="0.09"/><path d="M311.1 142.2 q-2.6 1.2 -7.3 4.3" fill="none" stroke="#888" stroke-width="0.6" opacity="0.17"/><path d="M757.0 334.8 q-1.3 -0.3 -4.5 1.5" fill="none" stroke="#888" stroke-width="0.6" opacity="0.09"/><path d="M637.4 259.4 q4.9 -0.7 7.8 0.6" fill="none" stroke="#888" stroke-width="0.6" opacity="0.10"/><path d="M212.4 51.5 q0.3 0.9 -1.5 3.7" fill="none" stroke="#888" stroke-width="0.6" opacity="0.12"/><path d="M484.3 555.1 q5.3 -0.7 8.5 0.5" fill="none" stroke="#888" stroke-width="0.6" opacity="0.17"/><path d="M228.0 486.5 q-0.2 1.6 -2.4 5.3" fill="none" stroke="#888" stroke-width="0.6" opacity="0.11"/><path d="M387.4 203.8 q2.9 -0.4 3.9 1.2" fill="none" stroke="#888" stroke-width="0.6" opacity="0.11"/><path d="M405.3 340.4 q-0.3 0.2 -2.7 2.5" fill="none" stroke="#888" stroke-width="0.6" opacity="0.09"/><path d="M771.2 314.7 q2.6 0.4 3.3 2.9" fill="none" stroke="#888" stroke-width="0.6" opacity="0.16"/><path d="M402.9 230.4 q-0.5 -0.7 -3.1 0.5" fill="none" stroke="#888" stroke-width="0.6" opacity="0.16"/><path d="M605.1 346.9 q0.5 0.5 -1.0 3.1" fill="none" stroke="#888" stroke-width="0.6" opacity="0.20"/><path d="M45.3 211.1 q2.2 2.8 2.5 7.6" fill="none" stroke="#888" stroke-width="0.6" opacity="0.17"/><path d="M735.1 327.9 q-1.5 -0.9 -4.9 0.2" fill="none" stroke="#888" stroke-width="0.6" opacity="0.13"/><path d="M489.3 188.8 q4.2 0.6 6.3 3.1" fill="none" stroke="#888" stroke-width="0.6" opacity="0.12"/><path d="M759.1 385.3 q2.8 -0.9 3.7 0.1" fill="none" stroke="#888" stroke-width="0.6" opacity="0.10"/><path d="M282.8 116.7 q-0.1 0.9 -2.2 3.8" fill="none" stroke="#888" stroke-width="0.6" opacity="0.13"/><path d="M346.2 579.6 q1.2 0.6 0.5 3.2" fill="none" stroke="#888" stroke-width="0.6" opacity="0.20"/><path d="M848.7 23.4 q-2.1 0.4 -6.1 2.8" fill="none" stroke="#888" stroke-width="0.6" opacity="0.19"/><path d="M543.7 365.0 q-0.3 -0.1 -2.6 1.8" fill="none" stroke="#888" stroke-width="0.6" opacity="0.09"/><path d="M106.1 7.9 q2.2 0.1 2.4 2.2" fill="none" stroke="#888" stroke-width="0.6" opacity="0.09"/><path d="M303.1 97.0 q5.3 -0.2 8.6 1.6" fill="none" stroke="#888" stroke-width="0.6" opacity="0.19"/><path d="M786.0 49.1 q-0.2 3.1 -2.4 8.2" fill="none" stroke="#888" stroke-width="0.6" opacity="0.13"/><path d="M446.1 514.3 q-2.1 -0.2 -6.2 1.7" fill="none" stroke="#888" stroke-width="0.6" opacity="0.11"/><path d="M641.7 430.2 q2.8 1.2 3.5 4.5" fill="none" stroke="#888" stroke-width="0.6" opacity="0.16"/><path d="M193.2 224.6 q0.6 1.6 -0.8 5.1" fill="none" stroke="#888" stroke-width="0.6" opacity="0.19"/><path d="M264.8 277.6 q-0.3 -0.1 -2.7 1.7" fill="none" stroke="#888" stroke-width="0.6" opacity="0.12"/><path d="M164.6 317.2 q-1.7 -0.7 -5.4 0.5" fill="none" stroke="#888" stroke-width="0.6" opacity="0.19"/><path d="M141.5 553.2 q2.3 1.1 2.6 4.2" fill="none" stroke="#888" stroke-width="0.6" opacity="0.11"/><path d="M765.9 125.6 q2.5 -0.7 3.1 0.6" fill="none" stroke="#888" stroke-width="0.6" opacity="0.15"/><path d="M528.4 202.2 q-0.5 1.7 -2.9 5.4" fill="none" stroke="#888" stroke-width="0.6" opacity="0.18"/><path d="M308.8 443.2 q0.7 3.5 -0.6 8.9" fill="none" stroke="#888" stroke-width="0.6" opacity="0.16"/><path d="M814.4 242.1 q0.0 0.7 -1.9 3.3" fill="none" stroke="#888" stroke-width="0.6" opacity="0.10"/><path d="M532.6 160.8 q-0.6 -0.1 -3.1 1.7" fill="none" stroke="#888" stroke-width="0.6" opacity="0.18"/><path d="M804.0 578.4 q3.3 1.5 4.5 5.1" fill="none" stroke="#888" stroke-width="0.6" opacity="0.16"/><path d="M613.5 240.0 q3.6 -0.1 5.2 1.7" fill="none" stroke="#888" stroke-width="0.6" opacity="0.15"/><path d="M102.4 230.9 q-0.9 -1.0 -3.9 0.1" fill="none" stroke="#888" stroke-width="0.6" opacity="0.18"/><path d="M243.6 361.0 q4.8 0.4 7.6 2.8" fill="none" stroke="#888" stroke-width="0.6" opacity="0.16"/><path d="M251.2 204.9 q2.4 1.8 2.7 5.5" fill="none" stroke="#888" stroke-width="0.6" opacity="0.15"/><path d="M565.2 3.9 q-2.1 2.2 -6.2 6.4" fill="none" stroke="#888" stroke-width="0.6" opacity="0.13"/><path d="M261.6 311.9 q-1.3 0.6 -4.6 3.3" fill="none" stroke="#888" stroke-width="0.6" opacity="0.13"/><path d="M202.2 477.4 q3.2 2.8 4.5 7.6" fill="none" stroke="#888" stroke-width="0.6" opacity="0.15"/><path d="M211.6 189.3 q-3.2 -0.6 -8.3 0.7" fill="none" stroke="#888" stroke-width="0.6" opacity="0.19"/><path d="M22.3 149.1 q-1.3 -0.2 -4.5 1.5" fill="none" stroke="#888" stroke-width="0.6" opacity="0.14"/><path d="M272.4 360.2 q1.8 2.9 1.6 7.8" fill="none" stroke="#888" stroke-width="0.6" opacity="0.17"/><path d="M375.0 269.7 q4.5 -0.5 7.0 0.9" fill="none" stroke="#888" stroke-width="0.6" opacity="0.13"/><path d="M9.1 39.7 q3.1 0.8 4.1 3.6" fill="none" stroke="#888" stroke-width="0.6" opacity="0.14"/><path d="M565.5 539.4 q2.8 -0.0 3.7 1.9" fill="none" stroke="#888" stroke-width="0.6" opacity="0.13"/><path d="M350.2 445.8 q-2.1 0.0 -6.2 2.0" fill="none" stroke="#888" stroke-width="0.6" opacity="0.16"/><path d="M650.9 53.6 q2.1 1.4 2.2 4.7" fill="none" stroke="#888" stroke-width="0.6" opacity="0.09"/><path d="M270.9 102.0 q-0.1 1.1 -2.2 4.2" fill="none" stroke="#888" stroke-width="0.6" opacity="0.12"/><path d="M815.7 295.7 q-2.4 -0.7 -6.8 0.6" fill="none" stroke="#888" stroke-width="0.6" opacity="0.14"/><path d="M711.7 120.7 q-1.6 -0.1 -5.2 1.8" fill="none" stroke="#888" stroke-width="0.6" opacity="0.09"/><path d="M492.6 61.9 q0.3 2.3 -1.5 6.6" fill="none" stroke="#888" stroke-width="0.6" opacity="0.17"/><path d="M603.2 6.2 q4.6 -1.0 7.3 0.1" fill="none" stroke="#888" stroke-width="0.6" opacity="0.15"/><path d="M799.7 231.0 q2.5 -0.5 2.9 0.9" fill="none" stroke="#888" stroke-width="0.6" opacity="0.08"/><path d="M152.8 446.8 q0.1 3.0 -1.7 8.0" fill="none" stroke="#888" stroke-width="0.6" opacity="0.19"/><path d="M448.5 83.5 q3.7 0.9 5.4 3.9" fill="none" stroke="#888" stroke-width="0.6" opacity="0.10"/><path d="M452.1 296.0 q2.7 -0.8 3.4 0.3" fill="none" stroke="#888" stroke-width="0.6" opacity="0.19"/><path d="M427.7 271.6 q1.8 2.8 1.7 7.6" fill="none" stroke="#888" stroke-width="0.6" opacity="0.16"/><path d="M596.9 336.3 q3.0 -0.0 4.0 1.9" fill="none" stroke="#888" stroke-width="0.6" opacity="0.11"/><path d="M28.7 365.3 q-2.9 0.9 -7.9 3.7" fill="none" stroke="#888" stroke-width="0.6" opacity="0.09"/><path d="M167.1 362.5 q3.2 -0.9 4.3 0.3" fill="none" stroke="#888" stroke-width="0.6" opacity="0.13"/><path d="M666.3 25.5 q3.2 -0.6 4.4 0.8" fill="none" stroke="#888" stroke-width="0.6" opacity="0.11"/><path d="M139.0 341.0 q2.3 -0.2 2.6 1.6" fill="none" stroke="#888" stroke-width="0.6" opacity="0.18"/><path d="M397.1 243.1 q3.9 2.0 5.8 5.9" fill="none" stroke="#888" stroke-width="0.6" opacity="0.20"/><path d="M58.9 393.5 q-0.7 1.8 -3.4 5.6" fill="none" stroke="#888" stroke-width="0.6" opacity="0.13"/><path d="M347.6 413.5 q5.1 -0.7 8.2 0.6" fill="none" stroke="#888" stroke-width="0.6" opacity="0.09"/><path d="M148.2 220.2 q5.1 -0.9 8.3 0.2" fill="none" stroke="#888" stroke-width="0.6" opacity="0.13"/><path d="M316.5 194.6 q-1.3 -0.0 -4.6 2.0" fill="none" stroke="#888" stroke-width="0.6" opacity="0.16"/><path d="M838.2 245.3 q-2.0 -0.1 -6.1 1.7" fill="none" stroke="#888" stroke-width="0.6" opacity="0.13"/><path d="M407.2 200.1 q1.5 1.3 0.9 4.6" fill="none" stroke="#888" stroke-width="0.6" opacity="0.08"/><path d="M701.8 140.5 q2.9 -0.2 3.8 1.7" fill="none" stroke="#888" stroke-width="0.6" opacity="0.15"/><path d="M686.7 322.4 q1.4 2.9 0.8 7.7" fill="none" stroke="#888" stroke-width="0.6" opacity="0.11"/><path d="M320.8 125.8 q2.0 2.2 2.0 6.5" fill="none" stroke="#888" stroke-width="0.6" opacity="0.15"/><path d="M259.2 276.5 q4.3 1.4 6.5 4.9" fill="none" stroke="#888" stroke-width="0.6" opacity="0.16"/><path d="M821.5 579.8 q0.2 1.7 -1.7 5.4" fill="none" stroke="#888" stroke-width="0.6" opacity="0.20"/><path d="M466.2 234.8 q0.9 0.9 -0.1 3.8" fill="none" stroke="#888" stroke-width="0.6" opacity="0.17"/><path d="M591.1 53.1 q-2.3 0.7 -6.6 3.3" fill="none" stroke="#888" stroke-width="0.6" opacity="0.17"/><path d="M25.0 417.3 q2.4 -0.3 2.8 1.4" fill="none" stroke="#888" stroke-width="0.6" opacity="0.17"/><path d="M605.7 450.9 q2.5 0.4 3.1 2.7" fill="none" stroke="#888" stroke-width="0.6" opacity="0.19"/><path d="M59.4 530.9 q-2.1 1.2 -6.2 4.3" fill="none" stroke="#888" stroke-width="0.6" opacity="0.10"/><path d="M626.7 51.1 q3.4 2.1 4.9 6.2" fill="none" stroke="#888" stroke-width="0.6" opacity="0.13"/><path d="M310.3 490.6 q1.4 2.4 0.8 6.7" fill="none" stroke="#888" stroke-width="0.6" opacity="0.16"/><path d="M752.6 544.2 q3.2 0.4 4.4 2.7" fill="none" stroke="#888" stroke-width="0.6" opacity="0.18"/><path d="M602.5 521.1 q4.6 -0.7 7.2 0.6" fill="none" stroke="#888" stroke-width="0.6" opacity="0.14"/><path d="M871.9 232.7 q-0.7 -0.5 -3.4 1.0" fill="none" stroke="#888" stroke-width="0.6" opacity="0.11"/><path d="M236.2 353.8 q3.7 1.2 5.5 4.5" fill="none" stroke="#888" stroke-width="0.6" opacity="0.13"/><path d="M530.6 250.2 q-0.4 0.4 -2.8 2.7" fill="none" stroke="#888" stroke-width="0.6" opacity="0.17"/><path d="M481.6 365.7 q-2.1 -0.4 -6.3 1.2" fill="none" stroke="#888" stroke-width="0.6" opacity="0.11"/><path d="M434.2 302.6 q-2.4 -0.2 -6.8 1.6" fill="none" stroke="#888" stroke-width="0.6" opacity="0.15"/><path d="M815.9 65.0 q-1.6 1.3 -5.1 4.7" fill="none" stroke="#888" stroke-width="0.6" opacity="0.19"/><path d="M763.1 340.0 q-1.6 2.6 -5.1 7.2" fill="none" stroke="#888" stroke-width="0.6" opacity="0.16"/><path d="M32.4 185.1 q-0.9 0.6 -3.9 3.3" fill="none" stroke="#888" stroke-width="0.6" opacity="0.19"/><path d="M363.8 432.2 q-2.3 -1.0 -6.7 0.0" fill="none" stroke="#888" stroke-width="0.6" opacity="0.11"/><path d="M459.8 202.8 q-1.8 -0.6 -5.6 0.9" fill="none" stroke="#888" stroke-width="0.6" opacity="0.12"/><path d="M438.7 400.0 q-2.0 0.6 -5.9 3.3" fill="none" stroke="#888" stroke-width="0.6" opacity="0.14"/><path d="M590.0 119.7 q-1.1 2.5 -4.2 6.9" fill="none" stroke="#888" stroke-width="0.6" opacity="0.17"/><path d="M426.9 110.0 q-2.9 -0.4 -7.9 1.2" fill="none" stroke="#888" stroke-width="0.6" opacity="0.15"/><path d="M152.2 95.1 q-0.7 0.4 -3.4 2.8" fill="none" stroke="#888" stroke-width="0.6" opacity="0.11"/><path d="M840.3 97.6 q1.8 0.6 1.6 3.2" fill="none" stroke="#888" stroke-width="0.6" opacity="0.16"/><path d="M119.6 398.7 q1.1 1.9 0.3 5.9" fill="none" stroke="#888" stroke-width="0.6" opacity="0.16"/><path d="M5.1 401.8 q4.1 0.4 6.3 2.8" fill="none" stroke="#888" stroke-width="0.6" opacity="0.16"/><path d="M116.3 411.2 q0.4 1.1 -1.2 4.3" fill="none" stroke="#888" stroke-width="0.6" opacity="0.16"/><path d="M102.9 246.7 q-2.5 -0.4 -6.9 1.3" fill="none" stroke="#888" stroke-width="0.6" opacity="0.10"/><path d="M854.0 487.7 q1.6 1.0 1.2 4.1" fill="none" stroke="#888" stroke-width="0.6" opacity="0.16"/><path d="M10.8 282.7 q5.1 -0.4 8.3 1.1" fill="none" stroke="#888" stroke-width="0.6" opacity="0.12"/><path d="M96.4 179.5 q-1.0 -0.8 -3.9 0.5" fill="none" stroke="#888" stroke-width="0.6" opacity="0.13"/><path d="M496.3 168.2 q0.7 0.6 -0.6 3.2" fill="none" stroke="#888" stroke-width="0.6" opacity="0.14"/><path d="M854.4 282.1 q-0.7 0.8 -3.5 3.6" fill="none" stroke="#888" stroke-width="0.6" opacity="0.17"/><path d="M230.6 374.8 q-1.9 -0.6 -5.9 0.8" fill="none" stroke="#888" stroke-width="0.6" opacity="0.17"/><path d="M280.6 208.8 q3.3 -0.3 4.5 1.3" fill="none" stroke="#888" stroke-width="0.6" opacity="0.15"/><path d="M637.1 406.3 q0.2 0.5 -1.6 3.1" fill="none" stroke="#888" stroke-width="0.6" opacity="0.17"/><path d="M22.1 229.7 q3.3 0.1 4.7 2.3" fill="none" stroke="#888" stroke-width="0.6" opacity="0.20"/><path d="M458.2 520.3 q0.0 0.5 -2.0 3.0" fill="none" stroke="#888" stroke-width="0.6" opacity="0.17"/><path d="M270.6 358.4 q2.3 2.2 2.5 6.4" fill="none" stroke="#888" stroke-width="0.6" opacity="0.12"/><path d="M200.8 79.2 q-2.9 0.0 -7.8 2.0" fill="none" stroke="#888" stroke-width="0.6" opacity="0.11"/><path d="M50.3 62.3 q-2.5 1.5 -6.9 5.0" fill="none" stroke="#888" stroke-width="0.6" opacity="0.20"/><path d="M351.6 29.4 q3.2 0.7 4.3 3.5" fill="none" stroke="#888" stroke-width="0.6" opacity="0.17"/><path d="M868.2 350.1 q0.3 0.8 -1.5 3.6" fill="none" stroke="#888" stroke-width="0.6" opacity="0.11"/><path d="M120.6 370.0 q2.4 3.2 2.7 8.5" fill="none" stroke="#888" stroke-width="0.6" opacity="0.18"/><path d="M418.0 126.8 q1.6 0.5 1.2 2.9" fill="none" stroke="#888" stroke-width="0.6" opacity="0.15"/><path d="M726.8 297.1 q2.5 -0.3 3.1 1.5" fill="none" stroke="#888" stroke-width="0.6" opacity="0.09"/><path d="M619.8 517.5 q2.5 -0.7 3.0 0.6" fill="none" stroke="#888" stroke-width="0.6" opacity="0.19"/><path d="M153.7 421.1 q1.6 0.4 1.1 2.8" fill="none" stroke="#888" stroke-width="0.6" opacity="0.18"/><path d="M588.8 329.7 q1.3 2.1 0.6 6.2" fill="none" stroke="#888" stroke-width="0.6" opacity="0.14"/><path d="M373.5 310.7 q0.2 0.8 -1.5 3.6" fill="none" stroke="#888" stroke-width="0.6" opacity="0.13"/><path d="M531.1 47.3 q-2.0 1.1 -6.1 4.1" fill="none" stroke="#888" stroke-width="0.6" opacity="0.12"/><path d="M574.2 328.3 q1.6 1.5 1.3 5.1" fill="none" stroke="#888" stroke-width="0.6" opacity="0.16"/><path d="M119.3 502.7 q0.7 2.4 -0.6 6.8" fill="none" stroke="#888" stroke-width="0.6" opacity="0.18"/><path d="M194.0 429.8 q-0.1 0.6 -2.2 3.2" fill="none" stroke="#888" stroke-width="0.6" opacity="0.15"/><path d="M483.9 548.0 q1.9 1.0 1.9 4.0" fill="none" stroke="#888" stroke-width="0.6" opacity="0.13"/><path d="M227.7 132.0 q-1.1 -0.8 -4.2 0.4" fill="none" stroke="#888" stroke-width="0.6" opacity="0.17"/><path d="M192.9 486.5 q0.1 0.8 -1.9 3.7" fill="none" stroke="#888" stroke-width="0.6" opacity="0.16"/><path d="M618.3 131.9 q1.4 2.1 0.8 6.2" fill="none" stroke="#888" stroke-width="0.6" opacity="0.16"/><path d="M641.4 528.3 q0.2 3.0 -1.7 7.9" fill="none" stroke="#888" stroke-width="0.6" opacity="0.16"/><path d="M697.9 78.0 q1.0 2.0 -0.1 6.0" fill="none" stroke="#888" stroke-width="0.6" opacity="0.18"/><path d="M826.7 364.1 q-2.0 -0.6 -6.0 0.8" fill="none" stroke="#888" stroke-width="0.6" opacity="0.14"/><path d="M598.2 316.2 q-1.1 -0.8 -4.1 0.4" fill="none" stroke="#888" stroke-width="0.6" opacity="0.14"/><path d="M81.2 216.9 q0.0 1.5 -2.0 5.1" fill="none" stroke="#888" stroke-width="0.6" opacity="0.09"/><path d="M36.4 407.8 q-1.9 -0.6 -5.7 0.8" fill="none" stroke="#888" stroke-width="0.6" opacity="0.09"/><path d="M118.2 527.9 q5.3 0.2 8.6 2.4" fill="none" stroke="#888" stroke-width="0.6" opacity="0.10"/><path d="M100.0 423.1 q2.1 1.3 2.3 4.7" fill="none" stroke="#888" stroke-width="0.6" opacity="0.18"/><path d="M701.2 427.7 q3.3 -0.9 4.5 0.2" fill="none" stroke="#888" stroke-width="0.6" opacity="0.11"/><path d="M447.5 304.9 q2.3 1.7 2.6 5.3" fill="none" stroke="#888" stroke-width="0.6" opacity="0.18"/><path d="M308.2 206.7 q2.7 1.8 3.4 5.7" fill="none" stroke="#888" stroke-width="0.6" opacity="0.08"/><path d="M793.7 140.9 q2.6 2.2 3.2 6.4" fill="none" stroke="#888" stroke-width="0.6" opacity="0.08"/><path d="M862.2 255.6 q-1.3 0.8 -4.7 3.6" fill="none" stroke="#888" stroke-width="0.6" opacity="0.09"/><path d="M225.3 87.3 q-3.0 -0.1 -8.1 1.8" fill="none" stroke="#888" stroke-width="0.6" opacity="0.16"/><path d="M729.2 341.8 q4.2 2.2 6.3 6.4" fill="none" stroke="#888" stroke-width="0.6" opacity="0.17"/><path d="M234.3 258.0 q5.5 -0.7 8.9 0.7" fill="none" stroke="#888" stroke-width="0.6" opacity="0.14"/><path d="M422.0 18.4 q-0.5 -0.2 -3.0 1.7" fill="none" stroke="#888" stroke-width="0.6" opacity="0.15"/><path d="M562.2 348.6 q-2.9 1.1 -7.8 4.2" fill="none" stroke="#888" stroke-width="0.6" opacity="0.16"/><path d="M391.2 133.2 q-2.0 -0.6 -6.0 0.8" fill="none" stroke="#888" stroke-width="0.6" opacity="0.12"/><path d="M460.6 180.8 q4.1 0.3 6.2 2.7" fill="none" stroke="#888" stroke-width="0.6" opacity="0.11"/><path d="M714.3 422.5 q2.5 1.5 2.9 5.0" fill="none" stroke="#888" stroke-width="0.6" opacity="0.19"/><path d="M274.1 194.9 q1.1 1.2 0.2 4.4" fill="none" stroke="#888" stroke-width="0.6" opacity="0.11"/><path d="M764.1 353.6 q-0.5 2.4 -2.9 6.7" fill="none" stroke="#888" stroke-width="0.6" opacity="0.10"/><path d="M335.2 36.9 q-1.6 -0.9 -5.1 0.1" fill="none" stroke="#888" stroke-width="0.6" opacity="0.15"/><path d="M509.6 80.8 q-1.5 2.4 -5.0 6.9" fill="none" stroke="#888" stroke-width="0.6" opacity="0.19"/><path d="M83.1 115.8 q1.7 2.1 1.5 6.3" fill="none" stroke="#888" stroke-width="0.6" opacity="0.09"/><path d="M690.5 460.8 q3.9 1.6 5.7 5.3" fill="none" stroke="#888" stroke-width="0.6" opacity="0.10"/><path d="M62.8 559.5 q2.2 1.3 2.5 4.5" fill="none" stroke="#888" stroke-width="0.6" opacity="0.18"/><path d="M213.8 507.1 q-0.6 1.0 -3.1 3.9" fill="none" stroke="#888" stroke-width="0.6" opacity="0.16"/><path d="M585.8 513.4 q-1.3 0.9 -4.7 3.8" fill="none" stroke="#888" stroke-width="0.6" opacity="0.19"/><path d="M705.6 579.0 q2.9 -0.0 3.8 1.9" fill="none" stroke="#888" stroke-width="0.6" opacity="0.19"/><path d="M585.5 235.3 q2.2 2.6 2.4 7.2" fill="none" stroke="#888" stroke-width="0.6" opacity="0.19"/><path d="M511.7 83.6 q-0.4 0.7 -2.9 3.5" fill="none" stroke="#888" stroke-width="0.6" opacity="0.15"/><path d="M574.5 561.1 q3.0 -0.5 4.0 0.9" fill="none" stroke="#888" stroke-width="0.6" opacity="0.19"/><path d="M510.1 176.8 q2.3 1.6 2.6 5.2" fill="none" stroke="#888" stroke-width="0.6" opacity="0.20"/><path d="M601.9 419.0 q-2.9 -0.0 -7.8 1.9" fill="none" stroke="#888" stroke-width="0.6" opacity="0.12"/><path d="M152.8 521.6 q0.5 2.7 -1.1 7.5" fill="none" stroke="#888" stroke-width="0.6" opacity="0.16"/><path d="M206.6 11.7 q3.8 -0.6 5.6 0.8" fill="none" stroke="#888" stroke-width="0.6" opacity="0.19"/><path d="M246.5 291.6 q3.1 -0.3 4.2 1.4" fill="none" stroke="#888" stroke-width="0.6" opacity="0.09"/><path d="M112.5 28.2 q4.8 -0.1 7.7 1.8" fill="none" stroke="#888" stroke-width="0.6" opacity="0.15"/><path d="M627.0 2.9 q3.3 1.6 4.5 5.2" fill="none" stroke="#888" stroke-width="0.6" opacity="0.08"/><path d="M281.6 16.0 q3.2 2.5 4.4 7.0" fill="none" stroke="#888" stroke-width="0.6" opacity="0.08"/><path d="M424.1 354.3 q-0.6 0.2 -3.3 2.4" fill="none" stroke="#888" stroke-width="0.6" opacity="0.18"/><path d="M694.3 50.7 q-0.3 2.6 -2.7 7.2" fill="none" stroke="#888" stroke-width="0.6" opacity="0.20"/><path d="M348.4 546.3 q-0.5 -0.4 -2.9 1.2" fill="none" stroke="#888" stroke-width="0.6" opacity="0.12"/><path d="M570.4 182.1 q2.0 2.5 1.9 7.0" fill="none" stroke="#888" stroke-width="0.6" opacity="0.18"/><path d="M136.6 10.8 q3.4 0.9 4.9 3.8" fill="none" stroke="#888" stroke-width="0.6" opacity="0.18"/><path d="M312.0 210.2 q2.7 2.1 3.3 6.2" fill="none" stroke="#888" stroke-width="0.6" opacity="0.18"/><path d="M133.8 570.2 q0.5 1.1 -1.0 4.3" fill="none" stroke="#888" stroke-width="0.6" opacity="0.15"/><path d="M709.3 277.5 q4.4 -0.7 6.8 0.7" fill="none" stroke="#888" stroke-width="0.6" opacity="0.16"/><path d="M479.2 410.4 q0.5 1.5 -1.0 5.1" fill="none" stroke="#888" stroke-width="0.6" opacity="0.14"/><path d="M238.9 146.9 q0.7 0.8 -0.7 3.5" fill="none" stroke="#888" stroke-width="0.6" opacity="0.18"/><path d="M851.8 87.5 q-0.1 1.5 -2.1 5.0" fill="none" stroke="#888" stroke-width="0.6" opacity="0.20"/><path d="M817.0 362.9 q3.9 0.2 5.8 2.3" fill="none" stroke="#888" stroke-width="0.6" opacity="0.10"/><path d="M677.9 150.5 q-0.2 2.5 -2.4 7.0" fill="none" stroke="#888" stroke-width="0.6" opacity="0.19"/><path d="M759.4 497.2 q-1.4 1.0 -4.7 3.9" fill="none" stroke="#888" stroke-width="0.6" opacity="0.12"/><path d="M618.8 256.5 q-0.9 -0.1 -3.9 1.8" fill="none" stroke="#888" stroke-width="0.6" opacity="0.19"/><path d="M785.7 226.0 q4.0 1.4 6.1 4.8" fill="none" stroke="#888" stroke-width="0.6" opacity="0.08"/><path d="M575.5 9.0 q-2.5 1.4 -7.0 4.8" fill="none" stroke="#888" stroke-width="0.6" opacity="0.16"/><path d="M305.8 132.5 q2.6 2.9 3.2 7.8" fill="none" stroke="#888" stroke-width="0.6" opacity="0.13"/><path d="M572.9 499.9 q2.6 -0.8 3.1 0.3" fill="none" stroke="#888" stroke-width="0.6" opacity="0.17"/><path d="M210.9 205.9 q2.4 1.4 2.9 4.7" fill="none" stroke="#888" stroke-width="0.6" opacity="0.11"/><path d="M766.9 289.7 q-2.9 -0.8 -7.7 0.5" fill="none" stroke="#888" stroke-width="0.6" opacity="0.14"/><path d="M814.3 446.9 q-0.9 -0.7 -3.8 0.5" fill="none" stroke="#888" stroke-width="0.6" opacity="0.12"/><path d="M77.1 2.3 q-1.1 -0.1 -4.1 1.8" fill="none" stroke="#888" stroke-width="0.6" opacity="0.12"/><path d="M532.1 555.9 q2.3 0.0 2.6 2.0" fill="none" stroke="#888" stroke-width="0.6" opacity="0.17"/><path d="M742.4 427.3 q4.8 -0.4 7.6 1.1" fill="none" stroke="#888" stroke-width="0.6" opacity="0.13"/><path d="M379.2 81.2 q-2.5 -0.3 -7.0 1.4" fill="none" stroke="#888" stroke-width="0.6" opacity="0.18"/><path d="M132.5 530.3 q3.2 -0.0 4.4 2.0" fill="none" stroke="#888" stroke-width="0.6" opacity="0.14"/><path d="M306.7 436.5 q1.3 1.7 0.6 5.3" fill="none" stroke="#888" stroke-width="0.6" opacity="0.13"/><path d="M560.0 386.6 q1.8 1.4 1.6 4.8" fill="none" stroke="#888" stroke-width="0.6" opacity="0.19"/><path d="M510.4 117.0 q0.4 0.4 -1.2 2.8" fill="none" stroke="#888" stroke-width="0.6" opacity="0.10"/><path d="M519.0 334.0 q-1.2 2.0 -4.3 6.0" fill="none" stroke="#888" stroke-width="0.6" opacity="0.09"/><path d="M779.6 37.5 q5.1 0.5 8.2 3.0" fill="none" stroke="#888" stroke-width="0.6" opacity="0.20"/><path d="M458.2 1.5 q3.4 1.0 4.8 4.0" fill="none" stroke="#888" stroke-width="0.6" opacity="0.16"/><path d="M475.7 577.2 q0.6 3.0 -0.8 8.0" fill="none" stroke="#888" stroke-width="0.6" opacity="0.19"/><path d="M67.4 563.9 q-3.0 1.0 -7.9 3.9" fill="none" stroke="#888" stroke-width="0.6" opacity="0.11"/><path d="M63.1 408.8 q3.3 -0.9 4.6 0.2" fill="none" stroke="#888" stroke-width="0.6" opacity="0.20"/><path d="M171.3 27.8 q-2.4 1.7 -6.9 5.3" fill="none" stroke="#888" stroke-width="0.6" opacity="0.11"/><path d="M284.0 24.1 q1.3 1.3 0.7 4.6" fill="none" stroke="#888" stroke-width="0.6" opacity="0.12"/><path d="M357.8 577.1 q-0.6 0.7 -3.2 3.3" fill="none" stroke="#888" stroke-width="0.6" opacity="0.13"/><path d="M470.9 222.5 q4.4 0.7 6.7 3.5" fill="none" stroke="#888" stroke-width="0.6" opacity="0.19"/><path d="M700.9 521.8 q0.1 1.0 -1.8 4.0" fill="none" stroke="#888" stroke-width="0.6" opacity="0.14"/><path d="M862.1 403.0 q-2.0 2.4 -5.9 6.7" fill="none" stroke="#888" stroke-width="0.6" opacity="0.18"/><path d="M578.5 50.4 q0.4 0.5 -1.2 3.0" fill="none" stroke="#888" stroke-width="0.6" opacity="0.17"/><path d="M353.9 324.5 q-0.6 1.4 -3.1 4.7" fill="none" stroke="#888" stroke-width="0.6" opacity="0.16"/><path d="M397.2 335.6 q1.3 2.4 0.6 6.9" fill="none" stroke="#888" stroke-width="0.6" opacity="0.14"/><path d="M298.5 317.3 q2.5 2.7 2.9 7.4" fill="none" stroke="#888" stroke-width="0.6" opacity="0.17"/><path d="M758.1 206.4 q5.3 -0.1 8.7 1.8" fill="none" stroke="#888" stroke-width="0.6" opacity="0.11"/><path d="M575.2 480.0 q4.8 -0.1 7.6 1.7" fill="none" stroke="#888" stroke-width="0.6" opacity="0.16"/><path d="M805.7 444.7 q3.7 2.0 5.5 5.9" fill="none" stroke="#888" stroke-width="0.6" opacity="0.18"/><path d="M303.3 342.5 q0.0 3.4 -2.0 8.8" fill="none" stroke="#888" stroke-width="0.6" opacity="0.09"/><path d="M660.3 211.5 q2.6 0.2 3.2 2.4" fill="none" stroke="#888" stroke-width="0.6" opacity="0.12"/><path d="M587.5 88.6 q0.0 0.8 -2.0 3.6" fill="none" stroke="#888" stroke-width="0.6" opacity="0.19"/><path d="M746.3 378.9 q-1.4 -0.3 -4.7 1.4" fill="none" stroke="#888" stroke-width="0.6" opacity="0.12"/><path d="M753.1 248.7 q2.0 2.5 2.0 6.9" fill="none" stroke="#888" stroke-width="0.6" opacity="0.13"/><path d="M318.1 385.2 q0.8 1.4 -0.3 4.8" fill="none" stroke="#888" stroke-width="0.6" opacity="0.16"/><path d="M239.8 168.8 q1.3 0.8 0.6 3.6" fill="none" stroke="#888" stroke-width="0.6" opacity="0.16"/><path d="M637.2 101.4 q0.9 0.5 -0.2 3.0" fill="none" stroke="#888" stroke-width="0.6" opacity="0.10"/><path d="M426.2 383.6 q-0.2 1.8 -2.3 5.7" fill="none" stroke="#888" stroke-width="0.6" opacity="0.18"/><path d="M220.5 323.2 q3.3 -1.0 4.6 0.0" fill="none" stroke="#888" stroke-width="0.6" opacity="0.15"/><path d="M267.3 316.4 q-1.2 -0.4 -4.4 1.2" fill="none" stroke="#888" stroke-width="0.6" opacity="0.11"/><path d="M382.0 305.1 q1.0 0.8 0.1 3.5" fill="none" stroke="#888" stroke-width="0.6" opacity="0.10"/><path d="M835.7 168.8 q-2.3 1.7 -6.6 5.4" fill="none" stroke="#888" stroke-width="0.6" opacity="0.17"/><path d="M327.6 24.3 q-2.1 2.1 -6.3 6.2" fill="none" stroke="#888" stroke-width="0.6" opacity="0.13"/><path d="M529.7 149.2 q4.0 1.8 5.9 5.5" fill="none" stroke="#888" stroke-width="0.6" opacity="0.10"/><path d="M539.4 568.0 q-1.9 0.5 -5.8 2.9" fill="none" stroke="#888" stroke-width="0.6" opacity="0.09"/><path d="M177.1 499.8 q3.7 -0.3 5.5 1.4" fill="none" stroke="#888" stroke-width="0.6" opacity="0.13"/><path d="M361.6 543.7 q-0.7 2.5 -3.4 7.0" fill="none" stroke="#888" stroke-width="0.6" opacity="0.09"/><path d="M491.4 543.3 q-0.7 1.3 -3.3 4.5" fill="none" stroke="#888" stroke-width="0.6" opacity="0.20"/><path d="M153.7 37.8 q1.6 0.8 1.2 3.6" fill="none" stroke="#888" stroke-width="0.6" opacity="0.17"/><path d="M8.3 135.0 q3.5 0.8 5.1 3.7" fill="none" stroke="#888" stroke-width="0.6" opacity="0.19"/><path d="M256.4 191.8 q2.0 1.7 2.0 5.4" fill="none" stroke="#888" stroke-width="0.6" opacity="0.09"/><path d="M739.4 331.8 q4.0 -0.9 6.0 0.3" fill="none" stroke="#888" stroke-width="0.6" opacity="0.18"/><path d="M188.0 263.9 q-0.8 0.1 -3.6 2.2" fill="none" stroke="#888" stroke-width="0.6" opacity="0.12"/><path d="M752.5 319.8 q-1.8 1.9 -5.7 5.7" fill="none" stroke="#888" stroke-width="0.6" opacity="0.10"/><path d="M354.9 29.1 q0.0 1.3 -1.9 4.5" fill="none" stroke="#888" stroke-width="0.6" opacity="0.10"/><path d="M856.5 108.2 q0.6 2.0 -0.7 6.1" fill="none" stroke="#888" stroke-width="0.6" opacity="0.09"/><path d="M334.6 385.8 q2.6 1.2 3.2 4.3" fill="none" stroke="#888" stroke-width="0.6" opacity="0.19"/><path d="M593.9 178.3 q2.9 0.9 3.8 3.7" fill="none" stroke="#888" stroke-width="0.6" opacity="0.13"/><path d="M470.5 177.2 q2.9 -0.1 3.9 1.7" fill="none" stroke="#888" stroke-width="0.6" opacity="0.16"/><path d="M813.1 381.3 q-0.2 0.5 -2.4 3.0" fill="none" stroke="#888" stroke-width="0.6" opacity="0.19"/><path d="M298.0 265.2 q-1.1 1.8 -4.2 5.6" fill="none" stroke="#888" stroke-width="0.6" opacity="0.17"/><path d="M7.4 39.3 q-2.9 -0.4 -7.8 1.2" fill="none" stroke="#888" stroke-width="0.6" opacity="0.08"/><path d="M191.6 255.1 q2.7 0.3 3.4 2.5" fill="none" stroke="#888" stroke-width="0.6" opacity="0.20"/><path d="M532.6 235.9 q-0.4 0.6 -2.8 3.2" fill="none" stroke="#888" stroke-width="0.6" opacity="0.10"/><path d="M157.1 498.6 q2.8 -0.3 3.5 1.5" fill="none" stroke="#888" stroke-width="0.6" opacity="0.19"/><path d="M710.1 288.8 q4.7 -0.8 7.3 0.3" fill="none" stroke="#888" stroke-width="0.6" opacity="0.17"/><path d="M143.1 128.3 q-1.4 1.9 -4.8 5.8" fill="none" stroke="#888" stroke-width="0.6" opacity="0.18"/><path d="M466.0 92.4 q-1.8 1.3 -5.6 4.7" fill="none" stroke="#888" stroke-width="0.6" opacity="0.14"/><path d="M406.1 117.1 q2.6 -0.5 3.2 0.9" fill="none" stroke="#888" stroke-width="0.6" opacity="0.11"/><path d="M726.9 410.3 q1.5 1.7 1.0 5.5" fill="none" stroke="#888" stroke-width="0.6" opacity="0.18"/><path d="M805.6 77.5 q3.5 0.4 5.0 2.7" fill="none" stroke="#888" stroke-width="0.6" opacity="0.17"/><path d="M762.8 463.2 q-1.2 1.9 -4.4 5.8" fill="none" stroke="#888" stroke-width="0.6" opacity="0.12"/><path d="M225.0 318.8 q4.4 1.7 6.8 5.4" fill="none" stroke="#888" stroke-width="0.6" opacity="0.16"/><path d="M201.3 566.0 q2.0 0.7 2.0 3.4" fill="none" stroke="#888" stroke-width="0.6" opacity="0.11"/><path d="M571.0 403.3 q2.6 0.1 3.2 2.3" fill="none" stroke="#888" stroke-width="0.6" opacity="0.10"/><path d="M290.5 233.2 q3.5 -0.7 5.1 0.6" fill="none" stroke="#888" stroke-width="0.6" opacity="0.16"/><path d="M183.5 381.2 q0.9 0.7 -0.3 3.4" fill="none" stroke="#888" stroke-width="0.6" opacity="0.14"/><path d="M15.5 454.0 q-3.0 0.4 -8.0 2.9" fill="none" stroke="#888" stroke-width="0.6" opacity="0.10"/><path d="M244.2 176.0 q0.0 2.6 -2.0 7.3" fill="none" stroke="#888" stroke-width="0.6" opacity="0.10"/><path d="M410.2 446.1 q-2.1 1.8 -6.2 5.7" fill="none" stroke="#888" stroke-width="0.6" opacity="0.15"/>
<defs>
<filter id="st" x="-40%" y="-30%" width="260%" height="160%" color-interpolation-filters="sRGB"><feComponentTransfer in="SourceAlpha" result="r0"><feFuncA type="linear" slope="0.1"/></feComponentTransfer><feOffset in="r0" dx="7" dy="0" result="o0"/><feComposite in="r0" in2="o0" operator="arithmetic" k1="0" k2="1" k3="0.92" k4="0" result="r1"/><feOffset in="r1" dx="14" dy="0" result="o1"/><feComposite in="r1" in2="o1" operator="arithmetic" k1="0" k2="1" k3="0.88" k4="0" result="r2"/><feOffset in="r2" dx="28" dy="0" result="o2"/><feComposite in="r2" in2="o2" operator="arithmetic" k1="0" k2="1" k3="0.82" k4="0" result="r3"/><feOffset in="r3" dx="56" dy="0" result="o3"/><feComposite in="r3" in2="o3" operator="arithmetic" k1="0" k2="1" k3="0.78" k4="0" result="r4"/><feOffset in="r4" dx="112" dy="0" result="o4"/><feComposite in="r4" in2="o4" operator="arithmetic" k1="0" k2="1" k3="0.72" k4="0" result="r5"/><feGaussianBlur in="r5" stdDeviation="10 0.6" result="bl0"/><feComponentTransfer in="bl0" result="bl"><feFuncA type="gamma" amplitude="1" exponent="0.75" offset="0"/></feComponentTransfer><feOffset in="bl" dx="0" dy="-3" result="bo"/><feFlood flood-color="#fff"/><feComposite in2="bo" operator="in"/></filter>
<filter id="yt0" x="-40%" y="-30%" width="260%" height="160%" color-interpolation-filters="sRGB"><feComponentTransfer in="SourceAlpha" result="r0"><feFuncA type="linear" slope="0.6"/></feComponentTransfer><feOffset in="r0" dx="-4" dy="0" result="o0"/><feComposite in="r0" in2="o0" operator="arithmetic" k1="0" k2="1" k3="1" k4="0" result="r1"/><feOffset in="r1" dx="-8" dy="0" result="o1"/><feComposite in="r1" in2="o1" operator="arithmetic" k1="0" k2="1" k3="0.9" k4="0" result="r2"/><feGaussianBlur in="r2" stdDeviation="3 0.5" result="bl0"/><feComponentTransfer in="bl0" result="bl"><feFuncA type="gamma" amplitude="1" exponent="1" offset="0"/></feComponentTransfer><feOffset in="bl" dx="0" dy="5" result="bo"/><feFlood flood-color="#fff"/><feComposite in2="bo" operator="in"/></filter>
<filter id="yt1" x="-40%" y="-30%" width="260%" height="160%" color-interpolation-filters="sRGB"><feComponentTransfer in="SourceAlpha" result="r0"><feFuncA type="linear" slope="0.6"/></feComponentTransfer><feOffset in="r0" dx="-4" dy="0" result="o0"/><feComposite in="r0" in2="o0" operator="arithmetic" k1="0" k2="1" k3="1" k4="0" result="r1"/><feOffset in="r1" dx="-8" dy="0" result="o1"/><feComposite in="r1" in2="o1" operator="arithmetic" k1="0" k2="1" k3="0.9" k4="0" result="r2"/><feGaussianBlur in="r2" stdDeviation="3 0.5" result="bl0"/><feComponentTransfer in="bl0" result="bl"><feFuncA type="gamma" amplitude="1" exponent="1" offset="0"/></feComponentTransfer><feOffset in="bl" dx="0" dy="1" result="bo"/><feFlood flood-color="#fff"/><feComposite in2="bo" operator="in"/></filter>
<filter id="yt2" x="-40%" y="-30%" width="260%" height="160%" color-interpolation-filters="sRGB"><feComponentTransfer in="SourceAlpha" result="r0"><feFuncA type="linear" slope="0.6"/></feComponentTransfer><feOffset in="r0" dx="-4" dy="0" result="o0"/><feComposite in="r0" in2="o0" operator="arithmetic" k1="0" k2="1" k3="1" k4="0" result="r1"/><feOffset in="r1" dx="-8" dy="0" result="o1"/><feComposite in="r1" in2="o1" operator="arithmetic" k1="0" k2="1" k3="0.9" k4="0" result="r2"/><feGaussianBlur in="r2" stdDeviation="3 0.5" result="bl0"/><feComponentTransfer in="bl0" result="bl"><feFuncA type="gamma" amplitude="1" exponent="1" offset="0"/></feComponentTransfer><feOffset in="bl" dx="-2" dy="2" result="bo"/><feFlood flood-color="#fff"/><feComposite in2="bo" operator="in"/></filter>
<filter id="wb" x="-10%" y="-20%" width="120%" height="140%"><feGaussianBlur stdDeviation="0.45"/></filter>
<filter id="cf" x="-10%" y="-20%" width="120%" height="140%"><feGaussianBlur stdDeviation="1.2 0.6"/></filter>
<g id="w0"><text transform="translate(323.34,221.20) scale(1.0816,1.0364)" font-family="Liberation Sans" font-weight="bold" font-size="79">Y</text><text transform="translate(377.63,221.20) scale(0.9891,1.0364)" font-family="Liberation Sans" font-weight="bold" font-size="79">O</text><text transform="translate(438.00,221.20) scale(1.0000,1.0364)" font-family="Liberation Sans" font-weight="bold" font-size="79">U</text><text transform="translate(495.57,221.20) scale(0.8860,1.0364)" font-family="Liberation Sans" font-weight="bold" font-size="79">R</text></g>
<mask id="lm0" maskUnits="userSpaceOnUse" x="0" y="0" width="872" height="581"><use href="#w0" fill="#fff" filter="url(#wb)"/></mask>
<mask id="cm0" maskUnits="userSpaceOnUse" x="0" y="0" width="872" height="581"><use href="#w0" fill="#fff" transform="translate(1,2)" filter="url(#cf)"/></mask>
<mask id="sm0" maskUnits="userSpaceOnUse" x="0" y="0" width="872" height="581"><g filter="url(#st)"><use href="#w0" fill="#000"/></g></mask>
<mask id="ym0" maskUnits="userSpaceOnUse" x="0" y="0" width="872" height="581"><g filter="url(#yt0)"><use href="#w0" fill="#000"/></g></mask>
<linearGradient id="sg0" gradientUnits="userSpaceOnUse" x1="326" y1="0" x2="801" y2="0"><stop offset="0" stop-color="#f0b0d0" stop-opacity="0"/><stop offset="0.3" stop-color="#f0b0d8" stop-opacity="0.3"/><stop offset="0.42" stop-color="#f4a0dc" stop-opacity="0.7"/><stop offset="0.6" stop-color="#e4a0f4" stop-opacity="0.85"/><stop offset="0.82" stop-color="#f4a0e8" stop-opacity="0.6"/><stop offset="1" stop-color="#f0c0e8" stop-opacity="0"/></linearGradient>
<linearGradient id="yg0" gradientUnits="userSpaceOnUse" x1="316" y1="0" x2="564" y2="0"><stop offset="0" stop-color="#eee050" stop-opacity="0.8"/><stop offset="0.6" stop-color="#eed860" stop-opacity="0.7"/><stop offset="1" stop-color="#f0c080" stop-opacity="0.45"/></linearGradient>
<g id="w1"><text transform="translate(307.49,318.50) scale(0.9417,1.0182)" font-family="Liberation Sans" font-weight="bold" font-size="79">I</text><text transform="translate(329.07,318.50) scale(1.0857,1.0182)" font-family="Liberation Sans" font-weight="bold" font-size="79">M</text><text transform="translate(400.74,318.50) scale(1.0302,1.0182)" font-family="Liberation Sans" font-weight="bold" font-size="79">A</text><text transform="translate(457.99,318.50) scale(0.9370,1.0182)" font-family="Liberation Sans" font-weight="bold" font-size="79">G</text><text transform="translate(515.82,318.50) scale(0.8956,1.0182)" font-family="Liberation Sans" font-weight="bold" font-size="79">E</text></g>
<mask id="lm1" maskUnits="userSpaceOnUse" x="0" y="0" width="872" height="581"><use href="#w1" fill="#fff" filter="url(#wb)"/></mask>
<mask id="cm1" maskUnits="userSpaceOnUse" x="0" y="0" width="872" height="581"><use href="#w1" fill="#fff" transform="translate(1,2)" filter="url(#cf)"/></mask>
<mask id="sm1" maskUnits="userSpaceOnUse" x="0" y="0" width="872" height="581"><g filter="url(#st)"><use href="#w1" fill="#000"/></g></mask>
<mask id="ym1" maskUnits="userSpaceOnUse" x="0" y="0" width="872" height="581"><g filter="url(#yt1)"><use href="#w1" fill="#000"/></g></mask>
<linearGradient id="sg1" gradientUnits="userSpaceOnUse" x1="312" y1="0" x2="821" y2="0"><stop offset="0" stop-color="#f0b0d0" stop-opacity="0"/><stop offset="0.3" stop-color="#f0b0d8" stop-opacity="0.3"/><stop offset="0.42" stop-color="#f4a0dc" stop-opacity="0.7"/><stop offset="0.6" stop-color="#e4a0f4" stop-opacity="0.85"/><stop offset="0.82" stop-color="#f4a0e8" stop-opacity="0.6"/><stop offset="1" stop-color="#f0c0e8" stop-opacity="0"/></linearGradient>
<linearGradient id="yg1" gradientUnits="userSpaceOnUse" x1="302" y1="0" x2="581" y2="0"><stop offset="0" stop-color="#eee050" stop-opacity="0.8"/><stop offset="0.6" stop-color="#eed860" stop-opacity="0.7"/><stop offset="1" stop-color="#f0c080" stop-opacity="0.45"/></linearGradient>
<g id="w2"><text transform="translate(333.39,416.80) scale(0.9830,1.0327)" font-family="Liberation Sans" font-weight="bold" font-size="79">H</text><text transform="translate(390.63,416.80) scale(0.8733,1.0327)" font-family="Liberation Sans" font-weight="bold" font-size="79">E</text><text transform="translate(437.45,416.80) scale(0.8900,1.0327)" font-family="Liberation Sans" font-weight="bold" font-size="79">R</text><text transform="translate(490.13,416.80) scale(0.8733,1.0327)" font-family="Liberation Sans" font-weight="bold" font-size="79">E</text></g>
<mask id="lm2" maskUnits="userSpaceOnUse" x="0" y="0" width="872" height="581"><use href="#w2" fill="#fff" filter="url(#wb)"/></mask>
<mask id="cm2" maskUnits="userSpaceOnUse" x="0" y="0" width="872" height="581"><use href="#w2" fill="#fff" transform="translate(1,2)" filter="url(#cf)"/></mask>
<mask id="sm2" maskUnits="userSpaceOnUse" x="0" y="0" width="872" height="581"><g filter="url(#st)"><use href="#w2" fill="#000"/></g></mask>
<mask id="ym2" maskUnits="userSpaceOnUse" x="0" y="0" width="872" height="581"><g filter="url(#yt2)"><use href="#w2" fill="#000"/></g></mask>
<linearGradient id="sg2" gradientUnits="userSpaceOnUse" x1="338" y1="0" x2="786" y2="0"><stop offset="0" stop-color="#f0b0d0" stop-opacity="0"/><stop offset="0.3" stop-color="#f0b0d8" stop-opacity="0.3"/><stop offset="0.42" stop-color="#f4a0dc" stop-opacity="0.7"/><stop offset="0.6" stop-color="#e4a0f4" stop-opacity="0.85"/><stop offset="0.82" stop-color="#f4a0e8" stop-opacity="0.6"/><stop offset="1" stop-color="#f0c0e8" stop-opacity="0"/></linearGradient>
<linearGradient id="yg2" gradientUnits="userSpaceOnUse" x1="328" y1="0" x2="554" y2="0"><stop offset="0" stop-color="#eee050" stop-opacity="0.8"/><stop offset="0.6" stop-color="#eed860" stop-opacity="0.7"/><stop offset="1" stop-color="#f0c080" stop-opacity="0.45"/></linearGradient>
<linearGradient id="g0" gradientUnits="userSpaceOnUse" x1="326" y1="0" x2="544" y2="0"><stop offset="0" stop-color="#2030b8"/><stop offset="0.3" stop-color="#2a44c4"/><stop offset="0.55" stop-color="#2870a8"/><stop offset="0.8" stop-color="#30a898"/><stop offset="1" stop-color="#38c0a0"/></linearGradient>
<linearGradient id="dk0" gradientUnits="userSpaceOnUse" x1="0" y1="164.2" x2="0" y2="221.2"><stop offset="0" stop-color="#303848" stop-opacity="0.7"/><stop offset="0.13" stop-color="#303848" stop-opacity="0.7"/><stop offset="0.15" stop-color="#fff" stop-opacity="0"/><stop offset="0.82" stop-color="#fff" stop-opacity="0"/><stop offset="0.85" stop-color="#305838" stop-opacity="0.55"/><stop offset="1" stop-color="#305838" stop-opacity="0.55"/></linearGradient>
<linearGradient id="g1" gradientUnits="userSpaceOnUse" x1="312" y1="0" x2="561" y2="0"><stop offset="0" stop-color="#181c48"/><stop offset="0.3" stop-color="#1e2a80"/><stop offset="0.5" stop-color="#284c98"/><stop offset="0.75" stop-color="#2a8070"/><stop offset="1" stop-color="#30a050"/></linearGradient>
<linearGradient id="dk1" gradientUnits="userSpaceOnUse" x1="0" y1="262.5" x2="0" y2="318.5"><stop offset="0" stop-color="#303848" stop-opacity="0.7"/><stop offset="0.13" stop-color="#303848" stop-opacity="0.7"/><stop offset="0.15" stop-color="#fff" stop-opacity="0"/><stop offset="0.82" stop-color="#fff" stop-opacity="0"/><stop offset="0.85" stop-color="#305838" stop-opacity="0.55"/><stop offset="1" stop-color="#305838" stop-opacity="0.55"/></linearGradient>
<linearGradient id="g2" gradientUnits="userSpaceOnUse" x1="338" y1="0" x2="534" y2="0"><stop offset="0" stop-color="#1c2c90"/><stop offset="0.3" stop-color="#1e3a70"/><stop offset="0.62" stop-color="#2a9ab0"/><stop offset="1" stop-color="#40d8b0"/></linearGradient>
<linearGradient id="dk2" gradientUnits="userSpaceOnUse" x1="0" y1="360.0" x2="0" y2="416.8"><stop offset="0" stop-color="#fff" stop-opacity="0"/><stop offset="0.17" stop-color="#fff" stop-opacity="0"/><stop offset="0.2" stop-color="#283040" stop-opacity="0.5"/><stop offset="1" stop-color="#283040" stop-opacity="0.5"/></linearGradient>
<linearGradient id="tp" x1="0" y1="0" x2="1" y2="0"><stop offset="0" stop-color="#f0a0d0" stop-opacity="0"/><stop offset="0.15" stop-color="#f0a0d8" stop-opacity="0.55"/><stop offset="0.5" stop-color="#f0a0e0" stop-opacity="0.5"/><stop offset="1" stop-color="#f0b0e0" stop-opacity="0"/></linearGradient>
<filter id="tpb" x="-10%" y="-100%" width="120%" height="300%"><feGaussianBlur stdDeviation="3 1.5"/></filter>
</defs>
<rect x="466" y="155" width="300" height="9" fill="url(#tp)" filter="url(#tpb)" style="mix-blend-mode:multiply"/>
<rect x="356" y="419" width="390" height="7" fill="url(#tp)" filter="url(#tpb)" style="mix-blend-mode:multiply"/>
<rect x="426" y="416" width="120" height="5" fill="#f0d050" opacity="0.6" filter="url(#tpb)" style="mix-blend-mode:multiply"/>
<rect x="0" y="139" width="872" height="110" fill="url(#sg0)" mask="url(#sm0)" style="mix-blend-mode:multiply"/>
<rect x="0" y="170" width="872" height="52" fill="url(#yg0)" mask="url(#ym0)"/>
<rect x="0" y="154" width="872" height="85" fill="#30c8e0" opacity="0.6" mask="url(#cm0)" style="mix-blend-mode:multiply"/>
<rect x="0" y="154" width="872" height="85" fill="url(#g0)" opacity="0.88" mask="url(#lm0)"/>
<rect x="0" y="162.2" width="872" height="9.5" fill="#303848" opacity="0.6" mask="url(#lm0)" style="mix-blend-mode:multiply"/>
<rect x="380" y="212.2" width="110" height="11" fill="#285838" opacity="0.55" mask="url(#lm0)" style="mix-blend-mode:multiply"/>
<rect x="500" y="190.2" width="50" height="8" fill="#50c040" opacity="0.5" mask="url(#lm0)" style="mix-blend-mode:multiply"/>
<rect x="0" y="238" width="872" height="110" fill="url(#sg1)" mask="url(#sm1)" style="mix-blend-mode:multiply"/>
<rect x="0" y="262" width="872" height="59" fill="url(#yg1)" mask="url(#ym1)"/>
<rect x="0" y="252" width="872" height="85" fill="#30c8e0" opacity="0.6" mask="url(#cm1)" style="mix-blend-mode:multiply"/>
<rect x="0" y="252" width="872" height="85" fill="url(#g1)" opacity="0.88" mask="url(#lm1)"/>
<rect x="0" y="252" width="872" height="85" fill="url(#dk1)" mask="url(#lm1)" style="mix-blend-mode:multiply"/>
<rect x="0" y="335" width="872" height="110" fill="url(#sg2)" mask="url(#sm2)" style="mix-blend-mode:multiply"/>
<rect x="0" y="362" width="872" height="54" fill="url(#yg2)" mask="url(#ym2)"/>
<rect x="0" y="350" width="872" height="85" fill="#30c8e0" opacity="0.6" mask="url(#cm2)" style="mix-blend-mode:multiply"/>
<rect x="0" y="350" width="872" height="85" fill="url(#g2)" opacity="0.88" mask="url(#lm2)"/>
<rect x="0" y="350" width="489" height="85" fill="url(#dk2)" mask="url(#lm2)" style="mix-blend-mode:multiply"/>
<rect x="436" y="369.0" width="110" height="7" fill="#40c850" opacity="0.5" mask="url(#lm2)" style="mix-blend-mode:multiply"/>
<rect x="436" y="384.0" width="110" height="7" fill="#30b0c0" opacity="0.45" mask="url(#lm2)" style="mix-blend-mode:multiply"/>
<rect x="436" y="400.0" width="110" height="7" fill="#40c080" opacity="0.45" mask="url(#lm2)" style="mix-blend-mode:multiply"/>
</svg>
</div>
</body></html>
